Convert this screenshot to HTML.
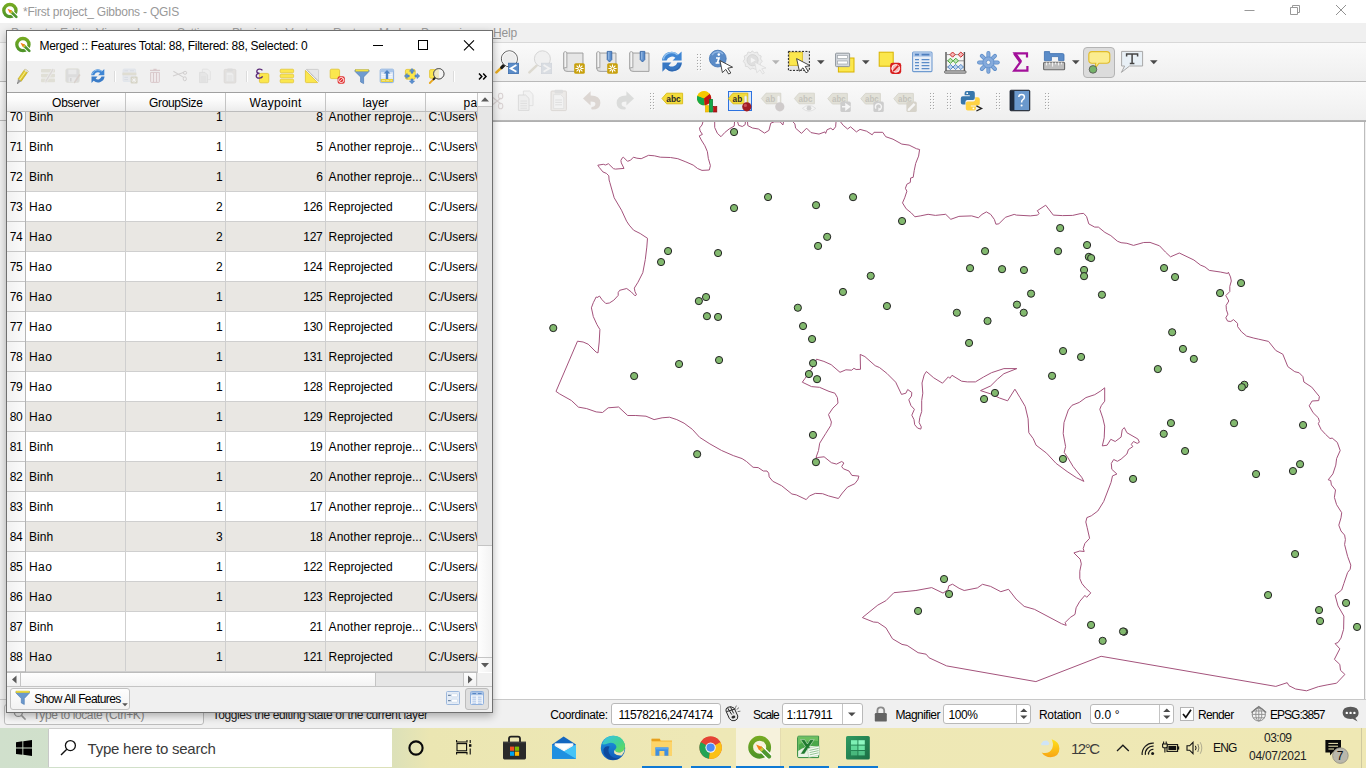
<!DOCTYPE html>
<html><head><meta charset="utf-8"><title>QGIS</title>
<style>
html,body{margin:0;padding:0;background:#fff;}
body{width:1366px;height:768px;overflow:hidden;font-family:"Liberation Sans",sans-serif;}
#root{position:relative;width:1366px;height:768px;overflow:hidden;background:#fff;}
.a{position:absolute;}
.t{position:absolute;white-space:pre;font-family:"Liberation Sans",sans-serif;}
svg{position:absolute;overflow:visible;}

</style></head>
<body>
<div id="root">
<div class="a" style="left:0;top:0;width:1366px;height:23px;background:#fff"></div>
<svg style="left:2px;top:3px" width="16" height="16" viewBox="0 0 16 16"><defs><linearGradient id="qg" x1="0" y1="0" x2="0" y2="1"><stop offset="0" stop-color="#74aa22"/><stop offset="1" stop-color="#4f9428"/></linearGradient></defs><circle cx="7.9" cy="7.6" r="6.1" fill="none" stroke="url(#qg)" stroke-width="3.3"/><path d="M8.6 8.4 L14.6 14.2" stroke="#fff" stroke-width="4.4" stroke-linecap="butt"/><path d="M9 8.8 L14.3 13.9" stroke="#4e9630" stroke-width="2.7" stroke-linecap="round"/><path d="M8 7.8 L10 9.8" stroke="#c9c23a" stroke-width="2.6"/><path d="M5.5 5.7 L9.7 7.5 L7.5 9.7 Z" fill="#f47f16"/></svg>
<span class="t" style="left:23.00px;top:3.50px;height:17px;line-height:17px;font-size:12px;color:#999999;letter-spacing:-0.224px;">*First project_ Gibbons - QGIS</span>
<svg style="left:1230px;top:-0.8px" width="136" height="23" viewBox="0 0 136 23"><path d="M14.5 11.5 H24.5" stroke="#999" stroke-width="1"/><path d="M60.5 8.5 H67.5 V15.5 H60.5 Z M62.5 8.5 V6.5 H69.5 V13.5 H67.5" fill="none" stroke="#999" stroke-width="1"/><path d="M106 6 L116 16 M116 6 L106 16" stroke="#8c8c8c" stroke-width="0.95"/></svg>
<div class="a" style="left:0;top:23px;width:1366px;height:19px;background:#f0f0f0"></div>
<div class="a" style="left:0;top:42px;width:1366px;height:1px;background:#d8d8d8"></div>
<span class="t" style="left:11.00px;top:24.50px;height:17px;line-height:17px;font-size:12px;color:#a0a0a0;letter-spacing:-0.051px;">Project</span>
<span class="t" style="left:60.00px;top:24.50px;height:17px;line-height:17px;font-size:12px;color:#a0a0a0;letter-spacing:0.328px;">Edit</span>
<span class="t" style="left:96.00px;top:24.50px;height:17px;line-height:17px;font-size:12px;color:#a0a0a0;letter-spacing:0.551px;">View</span>
<span class="t" style="left:137.00px;top:24.50px;height:17px;line-height:17px;font-size:12px;color:#a0a0a0;letter-spacing:-0.606px;">Layer</span>
<span class="t" style="left:177.00px;top:24.50px;height:17px;line-height:17px;font-size:12px;color:#a0a0a0;letter-spacing:-0.420px;">Settings</span>
<span class="t" style="left:232.00px;top:24.50px;height:17px;line-height:17px;font-size:12px;color:#a0a0a0;letter-spacing:-0.480px;">Plugins</span>
<span class="t" style="left:285.50px;top:24.50px;height:17px;line-height:17px;font-size:12px;color:#a0a0a0;letter-spacing:-0.172px;">Vector</span>
<span class="t" style="left:333.00px;top:24.50px;height:17px;line-height:17px;font-size:12px;color:#a0a0a0;letter-spacing:-0.557px;">Raster</span>
<span class="t" style="left:379.00px;top:24.50px;height:17px;line-height:17px;font-size:12px;color:#a0a0a0;letter-spacing:-1.086px;">Mesh</span>
<span class="t" style="left:421.00px;top:24.50px;height:17px;line-height:17px;font-size:12px;color:#a0a0a0;letter-spacing:-0.738px;">Processing</span>
<span class="t" style="left:493.00px;top:24.50px;height:17px;line-height:17px;font-size:12px;color:#949494;letter-spacing:-0.172px;">Help</span>
<div class="a" style="left:493px;top:38px;width:8px;height:1px;background:#8a8a8a"></div>
<div class="a" style="left:0;top:43px;width:1366px;height:38px;background:linear-gradient(#fafafa,#efefef)"></div>
<div class="a" style="left:0;top:81px;width:1366px;height:1px;background:#b9b9b9"></div>
<div class="a" style="left:0;top:82px;width:1366px;height:38px;background:linear-gradient(#fafafa,#efefef)"></div>
<div class="a" style="left:0;top:120px;width:1366px;height:2px;background:linear-gradient(#b8b8b8,#adadad)"></div>
<div class="a" style="left:0;top:122px;width:1366px;height:577px;background:#fff"></div>
<div class="a" style="left:1364px;top:122px;width:1px;height:577px;background:#bdbdbd"></div>
<div class="a" style="left:1365px;top:122px;width:1px;height:577px;background:#f0f0f0"></div>
<div class="a" style="left:0;top:699px;width:1366px;height:29px;background:#f0f0f0"></div>
<div class="a" style="left:0;top:699px;width:1366px;height:1px;background:#c8c8c8"></div>
<div class="a" style="left:0;top:728px;width:1366px;height:40px;background:linear-gradient(90deg,#d0e0cc 0px,#d2e0c8 200px,#dde1b8 395px,#ebe6b2 430px,#eee8b6 700px,#efe8b4 1366px)"></div>
<svg class="map" style="left:0;top:122px;overflow:hidden" width="1364" height="577" viewBox="0 122 1364 577"><polyline points="703.5,120 702.0,125.0 699.5,128.0 700.1,130.9 702.4,134.4 699.2,135.9 701.3,140.0 704.9,145.8 707.4,151.7 708.3,158.3 710.4,165.6 709.3,170.0 702.0,170.4 697.6,168.5 693.2,165.1 685.9,161.9 677.8,158.7 670.5,157.5 660.3,157.2 654.4,155.8 648.6,155.3 641.2,158.7 636.9,158.2 633.4,157.2 630.6,160.2 627.5,161.3 623.4,157.2 622,158.2 620.9,160.5 621.3,162.9 624,168.4 615.4,169.1 613.4,168.6 608.4,163.7 605.6,165 603.3,164.3 597.8,165.2 599.4,167.6 602.9,171.9 606.4,173.4 608.8,175.8 609.1,180 609.8,182.4 614.2,197.8 621.5,210.2 626.6,221.2 629.2,225.1 633.6,230.2 640.2,233.5 647.5,238.3 646.8,247.1 645.3,259.5 642.8,272.7 638,282.2 634.3,288.1 635,291.7 636.5,294.7 635,295.8 631.4,292 626.7,288.5 619.7,290.3 618.2,292.5 618.2,295.4 613.8,300.2 609.4,303 605.8,303.5 602.1,299.8 599.5,296.1 597,297.6 596.2,296.9 593.3,302.7 591.4,307.8 593.3,316.6 597,324.7 599.9,329.5 599.2,342 598,352.9 596.2,352.2 588.2,344.2 583.1,342 577.5,341.2 556,391.4 559.6,393.9 571.4,400.5 578.4,407.1 586.7,408.6 596.2,411.9 602.5,412.5 608.2,407.8 618.6,407 627.7,415.5 635.8,415.5 646,416.2 654.1,419.6 662.1,417.8 669.5,417.2 676.8,419.6 684.1,423.2 692.3,429.3 699.6,437.3 709.9,443.9 721.6,450.5 733.3,455.6 742.1,458.6 746.5,461.5 753.1,467.3 758.2,467.6 763.3,471 767,471 768.7,473.2 769.2,476.9 772.8,481.3 781.6,485.7 791.9,494 796.3,494.9 806.2,499.6 809.5,495.9 815.3,493.4 822.6,493.7 828.5,495.9 838.4,498.5 842.4,493 847.5,487.1 854.8,483.7 857.8,479.8 858.9,476.1 851.9,475.4 849,471 843.4,468.8 841.7,466.6 843.9,463 841.7,461.5 836.5,464.1 831.4,462.7 824.1,456.8 817.5,457.5 816,457.5 818.5,450.5 819.7,443.2 825.6,433.7 830.7,425.6 831.4,422 828.5,414.6 832.9,408.1 838,403.2 837.4,397.6 834.9,393.2 829,391.4 819.5,387.3 811.5,386.6 802.3,382.2 804.9,378.6 812.9,366.9 816.6,359.2 823.9,361.4 831.2,364.7 840,372.3 845.9,369.8 851.7,370.2 853.9,368.3 856.1,369.5 860.5,369.3 860.2,354.4 864.9,356.6 875.2,365.7 879.6,367.6 886.9,373.4 895.7,382.2 901.5,394.4 905.9,393.2 907.7,389.5 911.8,392.5 911.5,396.1 908.8,399.8 911,405.7 914.4,409.3 911.8,415.2 914,419.6 914.7,424.7 917.6,428.1 920.8,429.1 921.3,426.9 919.1,422.5 919.8,417.4 921.7,411.5 921.7,400.5 922.8,393.2 922,383 924.2,374.9 926.4,371.5 933.7,377.8 942.5,383.2 948.4,376.8 949.8,378.3 952,375.3 961.6,381.2 967.3,381.9 975.4,381.9 983.4,377.1 991.5,372.7 1003.9,368.6 1016.8,368.6 1003.9,373.7 997.3,379.3 990.7,385.9 980.5,390.6 990.7,393.9 999.5,398 1007.6,400.8 1014.9,389.2 1020,397.6 1025.2,406.4 1028.1,418.8 1028.8,432.7 1033.2,438.6 1036.1,445.2 1046.6,453.2 1056.1,463.4 1067.1,471.5 1076.6,477.8 1083.9,481.4 1081.7,477.3 1073,466.4 1067.8,457.6 1064.2,452.4 1065.6,446.6 1063.2,433.5 1064,422.5 1068.3,410 1072,405.3 1079.3,402.4 1085.9,397.6 1094.7,394.7 1100.6,391 1104.7,387.8 1104.7,401.2 1101.3,405.6 1099.8,409.3 1102.8,418.1 1104.7,426.1 1104.2,437.8 1102.3,445.9 1107.1,445.2 1110.8,439.3 1115.2,441.5 1121.1,437.1 1122.2,429.8 1124.3,427.6 1126.9,432.7 1137.9,439 1139.4,442.2 1137.2,443.4 1133.5,441.5 1131.3,444.4 1132.8,446.6 1128.4,449.6 1126.9,454 1121.1,459.1 1117.4,461.3 1113.7,459.5 1111.3,463.4 1111.8,469.3 1116.9,474 1112.5,475.9 1111,482.5 1103.7,501.5 1097.8,511 1091.3,515.8 1086.9,517.6 1085.8,522 1087.1,527.3 1089.6,538.3 1084.9,543.4 1083.2,548.6 1084.2,551.5 1079.8,551 1073.9,552.9 1080.2,559.2 1081.3,563.9 1079.8,571.2 1079.8,578.6 1082,583.7 1085.7,588.1 1090.8,592.9 1086.7,597.3 1084.9,595.4 1079.8,601.3 1076.1,607.8 1075,614.4 1070.3,617.4 1065.2,622.5 1066.2,625.4 1061.5,623.7 1034.4,609.3 1024.2,606.4 1016.1,599.1 1008.5,589.3 1000.8,591.7 990.6,586.4 982.5,584.3 977.4,587.9 964.2,590.5 959.1,588.3 952.5,584.2 948.8,585.8 947.8,589.8 943,593.1 931.7,587.6 915.9,590.5 893.9,592.7 885.9,600.7 877.8,605.1 862.4,617.6 873.4,622 877.8,622.4 885.9,627.8 892.5,638.8 902,644.4 907.1,645.4 918.1,652.7 926.1,654.2 929.1,657.8 946.6,665.9 1035.9,681.6 1101.1,656.3 1275.8,686.4 1287.2,682.7 1289,685.7 1295.6,689 1306.6,690.8 1318.3,686.7 1327.1,684.9 1336.6,683.2 1344.9,674.4 1340.5,670.3 1339.8,664.4 1334.4,659.3 1339.8,648.8 1335.1,643.6 1338,642.5 1341,638.1 1343.6,629.3 1343.9,616.1 1338,605.9 1335.1,595.2 1341.7,590 1343.9,583.4 1347.6,572.5 1350.2,569.2 1350.8,565.1 1347.6,556.4 1344.6,544.6 1345.4,539.5 1344.6,535.1 1341,531 1338.8,525.2 1341,517.8 1341.7,512.7 1336.6,504.7 1334.4,497.4 1335.5,490 1331.4,484.9 1330.7,480.5 1328.2,479.8 1332.9,473.9 1335.8,465.1 1336.6,458.6 1340.2,450.5 1337.3,442.4 1332.2,438.1 1330,438.5 1325.6,434.4 1321.2,429.6 1318.3,423.7 1319.4,421.5 1318.3,417.8 1313.1,412.7 1309.2,405.8 1312.1,401 1318.7,400.6 1319.4,396.6 1311.7,387.1 1303.9,382 1302.9,376.6 1299.2,372.8 1294.8,371.7 1287.8,366.6 1282.8,354.2 1275.8,350.5 1268.5,341.4 1258.3,339.1 1253.8,338.1 1246.6,336.1 1241.5,331.8 1237.6,326.6 1237.6,323.4 1233.5,319.6 1230.8,321.5 1227.6,321.1 1225.8,317.8 1227.9,314.2 1226.4,309.8 1226.1,305.4 1228.8,301 1225.8,295.6 1229.8,291.5 1229.8,286.4 1231.3,281 1230.5,276.9 1228.3,272.2 1227.6,273.5 1220.3,272 1209.3,270.4 1204.9,266.9 1200.5,265.1 1193.9,260 1179.3,253 1170.5,256.8 1165.4,252 1159.5,245.8 1150,242.4 1143.7,242.5 1133.5,245.4 1126.9,243.3 1121.1,242.7 1117.4,241.2 1110.8,235.6 1104.9,232.4 1098.4,227.1 1094.7,227.1 1088.8,223.9 1086.6,216.6 1083.7,213.4 1080.1,213.7 1072.7,215.4 1062.5,215.6 1053.3,215.1 1045.7,205.2 1037.3,210.7 1039.1,213.4 1037.6,215.1 1030.3,215.9 1016.4,215.1 1014.2,214.4 1005.4,217.3 998.8,223.9 995.9,224.2 994.4,219.5 990.7,214.4 986.4,211.9 982,214.4 978.3,217.8 971.7,215.9 960,216.3 958.9,216.4 950.8,219.3 945.7,214.3 935.4,215.4 928.1,214.3 920.8,215.8 914.9,216.8 911.3,212.9 906.2,208.8 902.5,202.9 904.7,197.8 906.9,191.2 905.4,188.3 906.9,184.2 910.3,182.4 910.6,178.0 913.2,177.3 914.2,170.7 915.7,163.4 918.6,156.1 919.6,149.5 916.4,148.7 909.1,145.1 901.8,144.1 893.0,139.2 885.7,136.7 882.7,132.3 874.0,132.3 872.2,134.8 866.6,131.2 860.0,129.4 856.4,131.9 850.5,126.8 847.6,129.0 843.2,125.3 839.1,120" fill="none" stroke="#a4537c" stroke-width="1" stroke-linejoin="round"/><polyline points="714.7,120 714.7,127.5 717.4,133.4 721.0,136.7 724.7,132.6 729.1,129.0 734.2,126.1 734.7,120" fill="none" stroke="#a4537c" stroke-width="1" stroke-linejoin="round"/><polyline points="737.1,120 738.6,125.3 742.3,126.5 745.2,124.6 745.5,120" fill="none" stroke="#a4537c" stroke-width="1" stroke-linejoin="round"/><polyline points="747.4,120 747.8,125.6 752.5,128.0 758.4,129.0 764.5,133.1 768.9,130.4 770.8,123.1 774.5,121.8 780.2,121.8 782.9,125.0 783.9,120" fill="none" stroke="#a4537c" stroke-width="1" stroke-linejoin="round"/><polyline points="791.2,120 794.9,123.9 795.6,128.2 801.5,133.4 806.6,128.2 811.0,132.6 819.0,134.1 824.9,131.9 825.6,133.4 827.1,129.7 830.8,128.2 833,130 835.6,126.8 836.2,120" fill="none" stroke="#a4537c" stroke-width="1" stroke-linejoin="round"/><g fill="#82b96e" stroke="#232323" stroke-width="1"><circle cx="734.05" cy="132.05" r="3.6"/><circle cx="768.05" cy="197.05" r="3.6"/><circle cx="734.05" cy="208.05" r="3.6"/><circle cx="816.05" cy="205.15" r="3.6"/><circle cx="853.05" cy="197.15" r="3.6"/><circle cx="902.05" cy="221.05" r="3.6"/><circle cx="827.15" cy="236.85" r="3.6"/><circle cx="818.05" cy="245.95" r="3.6"/><circle cx="668.05" cy="251.05" r="3.6"/><circle cx="661.05" cy="262.05" r="3.6"/><circle cx="718.05" cy="253.05" r="3.6"/><circle cx="870.75" cy="275.85" r="3.6"/><circle cx="842.95" cy="291.95" r="3.6"/><circle cx="886.95" cy="306.05" r="3.6"/><circle cx="797.85" cy="307.75" r="3.6"/><circle cx="706.05" cy="297.05" r="3.6"/><circle cx="698.85" cy="301.05" r="3.6"/><circle cx="706.95" cy="316.15" r="3.6"/><circle cx="718.05" cy="316.95" r="3.6"/><circle cx="803.05" cy="326.05" r="3.6"/><circle cx="812.05" cy="339.05" r="3.6"/><circle cx="553.25" cy="328.05" r="3.6"/><circle cx="719.05" cy="360.05" r="3.6"/><circle cx="679.05" cy="364.05" r="3.6"/><circle cx="634.15" cy="376.05" r="3.6"/><circle cx="813.05" cy="363.15" r="3.6"/><circle cx="808.95" cy="374.05" r="3.6"/><circle cx="817.05" cy="379.15" r="3.6"/><circle cx="812.95" cy="434.95" r="3.6"/><circle cx="697.15" cy="454.15" r="3.6"/><circle cx="815.95" cy="462.15" r="3.6"/><circle cx="1060.15" cy="228.05" r="3.6"/><circle cx="1087.05" cy="245.05" r="3.6"/><circle cx="1058.05" cy="251.15" r="3.6"/><circle cx="1088.85" cy="256.85" r="3.6"/><circle cx="1091.15" cy="258.05" r="3.6"/><circle cx="985.05" cy="251.15" r="3.6"/><circle cx="970.05" cy="268.15" r="3.6"/><circle cx="1002.05" cy="269.15" r="3.6"/><circle cx="1023.95" cy="270.05" r="3.6"/><circle cx="1084.05" cy="269.95" r="3.6"/><circle cx="1084.05" cy="276.15" r="3.6"/><circle cx="1101.95" cy="294.75" r="3.6"/><circle cx="1031.05" cy="293.65" r="3.6"/><circle cx="1016.95" cy="304.65" r="3.6"/><circle cx="1023.75" cy="312.75" r="3.6"/><circle cx="956.85" cy="312.75" r="3.6"/><circle cx="987.55" cy="320.95" r="3.6"/><circle cx="969.05" cy="342.95" r="3.6"/><circle cx="1063.05" cy="351.05" r="3.6"/><circle cx="1081.05" cy="356.95" r="3.6"/><circle cx="1052.05" cy="375.85" r="3.6"/><circle cx="994.95" cy="392.95" r="3.6"/><circle cx="984.05" cy="399.05" r="3.6"/><circle cx="1164.05" cy="268.05" r="3.6"/><circle cx="1175.05" cy="277.05" r="3.6"/><circle cx="1241.05" cy="283.05" r="3.6"/><circle cx="1220.05" cy="293.05" r="3.6"/><circle cx="1172.15" cy="332.25" r="3.6"/><circle cx="1182.95" cy="348.95" r="3.6"/><circle cx="1193.85" cy="358.95" r="3.6"/><circle cx="1157.85" cy="369.05" r="3.6"/><circle cx="1244.35" cy="384.75" r="3.6"/><circle cx="1241.85" cy="387.15" r="3.6"/><circle cx="1170.95" cy="423.05" r="3.6"/><circle cx="1163.75" cy="433.85" r="3.6"/><circle cx="1234.05" cy="423.15" r="3.6"/><circle cx="1303.05" cy="425.05" r="3.6"/><circle cx="1185.05" cy="451.05" r="3.6"/><circle cx="1062.95" cy="458.95" r="3.6"/><circle cx="1133.05" cy="478.95" r="3.6"/><circle cx="1300.05" cy="464.15" r="3.6"/><circle cx="1292.95" cy="471.05" r="3.6"/><circle cx="1256.05" cy="474.05" r="3.6"/><circle cx="1295.05" cy="554.05" r="3.6"/><circle cx="1268.05" cy="595.05" r="3.6"/><circle cx="1319.05" cy="610.05" r="3.6"/><circle cx="1320.05" cy="621.05" r="3.6"/><circle cx="1346.05" cy="602.95" r="3.6"/><circle cx="1357.05" cy="626.95" r="3.6"/><circle cx="944.05" cy="579.05" r="3.6"/><circle cx="949.05" cy="594.05" r="3.6"/><circle cx="918.05" cy="610.95" r="3.6"/><circle cx="1091.05" cy="624.95" r="3.6"/><circle cx="1102.65" cy="640.85" r="3.6"/><circle cx="1124.05" cy="631.75" r="3.6"/><circle cx="1123.05" cy="631.45" r="3.6"/></g></svg>
<svg style="left:494px;top:49px" width="26" height="26" viewBox="0 0 26 26"><path d="M9.6 16.6 L2.4 23.4" stroke="#e8ab1e" stroke-width="2.6" stroke-linecap="round"/><path d="M9.8 16.4 L7.6 18.6" stroke="#1a1a1a" stroke-width="3" stroke-linecap="round"/><circle cx="15.4" cy="9.8" r="8" fill="#ececec" stroke="#555" stroke-width="1"/><circle cx="15.4" cy="9.8" r="7" fill="none" stroke="#fafafa" stroke-width="1"/><rect x="14.4" y="14.2" width="10.2" height="10.4" fill="#5b8cc8" stroke="#3d6fae" stroke-width="0.8"/><path d="M22.4 16 L16.6 19.4 L22.4 22.8" fill="none" stroke="#fff" stroke-width="1.8"/></svg>
<svg style="left:527px;top:49px" width="26" height="26" viewBox="0 0 26 26"><path d="M9.6 16.6 L2.4 23.4" stroke="#dcd9d0" stroke-width="2.6" stroke-linecap="round"/><circle cx="15.4" cy="9.8" r="8" fill="#f0f0f0" stroke="#d6d6d6" stroke-width="1"/><rect x="14.4" y="14.2" width="10.2" height="10.4" fill="#d9dde2" stroke="#d2d6dc" stroke-width="0.8"/><path d="M16.6 16 L22.4 19.4 L16.6 22.8" fill="none" stroke="#f2f2f2" stroke-width="1.8"/></svg>
<svg style="left:563px;top:50.6px" width="23" height="24" viewBox="0 0 23 24"><path d="M3.6 2 H20 V20.4 H4 Q0.8 20.4 0.8 17.6 V2 Z" fill="#dedede" stroke="#9b9b9b" stroke-width="0.9"/><path d="M0.8 2 Q0.8 0.6 2.2 0.6 Q3.8 0.6 3.8 2 V16.6 Q0.8 16.2 0.8 17.6 Z" fill="#f4f4f4" stroke="#9b9b9b" stroke-width="0.8"/><path d="M5 3 H19 V19.4 H5 Z" fill="#e6e6e6"/><rect x="11.2" y="12.2" width="10.6" height="10.6" rx="1.6" fill="#c8a00c"/><path d="M16.5 13.4 V21.6 M12.4 17.5 H20.6 M13.6 14.6 L19.4 20.4 M19.4 14.6 L13.6 20.4" stroke="#fff" stroke-width="1.1"/><circle cx="16.5" cy="17.5" r="1.5" fill="#c8a00c" stroke="#fff" stroke-width="0.9"/></svg>
<svg style="left:596px;top:50.6px" width="23" height="24" viewBox="0 0 23 24"><path d="M3.6 2 H20 V20.4 H4 Q0.8 20.4 0.8 17.6 V2 Z" fill="#dedede" stroke="#9b9b9b" stroke-width="0.9"/><path d="M0.8 2 Q0.8 0.6 2.2 0.6 Q3.8 0.6 3.8 2 V16.6 Q0.8 16.2 0.8 17.6 Z" fill="#f4f4f4" stroke="#9b9b9b" stroke-width="0.8"/><path d="M5 3 H19 V19.4 H5 Z" fill="#e6e6e6"/><path d="M11.2 0.4 H15.799999999999999 V8.6 L13.5 11 L11.2 8.6 Z" fill="#5d8fcd" stroke="#2f5f9f" stroke-width="0.8"/><path d="M12.799999999999999 1 V8.6" stroke="#a9c7ea" stroke-width="0.9"/><rect x="11.2" y="12.2" width="10.6" height="10.6" rx="1.6" fill="#c8a00c"/><path d="M16.5 13.4 V21.6 M12.4 17.5 H20.6 M13.6 14.6 L19.4 20.4 M19.4 14.6 L13.6 20.4" stroke="#fff" stroke-width="1.1"/><circle cx="16.5" cy="17.5" r="1.5" fill="#c8a00c" stroke="#fff" stroke-width="0.9"/></svg>
<svg style="left:629px;top:50.6px" width="23" height="24" viewBox="0 0 23 24"><path d="M3.6 2 H20 V20.4 H4 Q0.8 20.4 0.8 17.6 V2 Z" fill="#dedede" stroke="#9b9b9b" stroke-width="0.9"/><path d="M0.8 2 Q0.8 0.6 2.2 0.6 Q3.8 0.6 3.8 2 V16.6 Q0.8 16.2 0.8 17.6 Z" fill="#f4f4f4" stroke="#9b9b9b" stroke-width="0.8"/><path d="M5 3 H19 V19.4 H5 Z" fill="#e6e6e6"/><path d="M11.2 0.4 H15.799999999999999 V8.6 L13.5 11 L11.2 8.6 Z" fill="#5d8fcd" stroke="#2f5f9f" stroke-width="0.8"/><path d="M12.799999999999999 1 V8.6" stroke="#a9c7ea" stroke-width="0.9"/></svg>
<svg style="left:661px;top:50px" width="22" height="24" viewBox="0 0 22 24"><path d="M1 10.6 A9.6 9.6 0 0 1 17.4 4.6 L20.6 1.4 L20.6 10.6 L11.6 10.6 L14.4 7.8 A5.6 5.6 0 0 0 5.6 10.6 Z" fill="#3f86d4"/><path d="M21 12.6 A9.6 9.6 0 0 1 4.6 18.6 L1.4 21.8 L1.4 12.6 L10.4 12.6 L7.6 15.4 A5.6 5.6 0 0 0 16.4 12.6 Z" fill="#3878c4"/><path d="M2.4 9.4 A8.4 8.4 0 0 1 16.6 5" fill="none" stroke="#8fc0ee" stroke-width="1.4"/><path d="M19.6 13.8 A8.4 8.4 0 0 1 5.4 18.2" fill="none" stroke="#2f68b0" stroke-width="1.2"/></svg>
<svg style="left:697px;top:54px" width="5" height="18" viewBox="0 0 5 18"><rect x="1" y="1" width="1" height="1" fill="#fdfdfd"/><rect x="0" y="0" width="1" height="1" fill="#a6a6a6"/><rect x="4" y="1" width="1" height="1" fill="#fdfdfd"/><rect x="3" y="0" width="1" height="1" fill="#a6a6a6"/><rect x="1" y="4" width="1" height="1" fill="#fdfdfd"/><rect x="0" y="3" width="1" height="1" fill="#a6a6a6"/><rect x="4" y="4" width="1" height="1" fill="#fdfdfd"/><rect x="3" y="3" width="1" height="1" fill="#a6a6a6"/><rect x="1" y="7" width="1" height="1" fill="#fdfdfd"/><rect x="0" y="6" width="1" height="1" fill="#a6a6a6"/><rect x="4" y="7" width="1" height="1" fill="#fdfdfd"/><rect x="3" y="6" width="1" height="1" fill="#a6a6a6"/><rect x="1" y="10" width="1" height="1" fill="#fdfdfd"/><rect x="0" y="9" width="1" height="1" fill="#a6a6a6"/><rect x="4" y="10" width="1" height="1" fill="#fdfdfd"/><rect x="3" y="9" width="1" height="1" fill="#a6a6a6"/><rect x="1" y="13" width="1" height="1" fill="#fdfdfd"/><rect x="0" y="12" width="1" height="1" fill="#a6a6a6"/><rect x="4" y="13" width="1" height="1" fill="#fdfdfd"/><rect x="3" y="12" width="1" height="1" fill="#a6a6a6"/><rect x="1" y="16" width="1" height="1" fill="#fdfdfd"/><rect x="0" y="15" width="1" height="1" fill="#a6a6a6"/><rect x="4" y="16" width="1" height="1" fill="#fdfdfd"/><rect x="3" y="15" width="1" height="1" fill="#a6a6a6"/></svg>
<svg style="left:709px;top:50px" width="26" height="25" viewBox="0 0 26 25"><circle cx="8.8" cy="8.6" r="8.4" fill="#5b8cc8" stroke="#3f72b4" stroke-width="0.8"/><path d="M3 5 A7 7 0 0 1 14 4" fill="none" stroke="#8db4e2" stroke-width="1.4"/><circle cx="9.8" cy="4.6" r="1.3" fill="#fff"/><path d="M7 8 H10 L8.4 13 H10.4 M6.6 13 H10.4" fill="none" stroke="#fff" stroke-width="1.7"/><path d="M11 10.6 L23.6 17.2 L18.8 18.2 L21.8 23 L19.6 24 L16.8 19.4 L13.4 22.6 Z" fill="#fff" stroke="#333" stroke-width="0.9"/></svg>
<svg style="left:742px;top:50px" width="26" height="25" viewBox="0 0 26 25"><path d="M10 0.8 L12.4 2.6 L15.4 2 L16.4 4.8 L19.2 6 L18.6 9 L20.4 11.4 L18.2 13.4 L18.2 16.4 L15.2 16.8 L13.6 19.4 L10.8 18.2 L8 19.4 L6.2 16.8 L3.4 16.4 L3.2 13.4 L1 11.4 L2.8 9 L2.2 6 L5 4.8 L6 2 L9 2.6 Z" fill="#ededed" stroke="#d9d9d9" stroke-width="0.9"/><circle cx="10.6" cy="10.2" r="5.6" fill="#dfdfdf" stroke="#d2d2d2" stroke-width="0.8"/><path d="M8.8 7.4 L13.6 10.2 L8.8 13 Z" fill="#f4f4f4"/><path d="M12.6 12 L24 18 L19.8 18.8 L22.4 23 L20.6 24 L18 19.8 L14.8 22.8 Z" fill="#f2f2f2" stroke="#dcdcdc" stroke-width="0.8"/></svg>
<svg style="left:772px;top:60px" width="8" height="5" viewBox="0 0 8 5"><path d="M0 0.3 H7.6 L3.8 4.2 Z" fill="#b4b4b4"/></svg>
<svg style="left:787px;top:50px" width="26" height="26" viewBox="0 0 26 26"><rect x="1.4" y="1.4" width="21" height="19" fill="#e4e4e4"/><rect x="2.2" y="2.2" width="13.2" height="13.2" fill="#fbe74d" stroke="#d8b92a" stroke-width="0.9"/><rect x="1.4" y="1.4" width="21" height="19" fill="none" stroke="#222" stroke-width="1" stroke-dasharray="2 1.4"/><path d="M9.6 8.6 L23 15.6 L18.2 16.6 L21.2 21.6 L19 22.8 L16 17.8 L12.4 21.2 Z" fill="#fff" stroke="#333" stroke-width="0.9"/></svg>
<svg style="left:817px;top:60px" width="8" height="5" viewBox="0 0 8 5"><path d="M0 0.3 H7.6 L3.8 4.2 Z" fill="#4a4a4a"/></svg>
<svg style="left:835px;top:52px" width="20" height="21" viewBox="0 0 20 21"><rect x="3.4" y="6" width="15.6" height="14" fill="#fbe74d" stroke="#d8b200" stroke-width="1"/><rect x="0.6" y="1.2" width="14" height="13.4" rx="0.8" fill="#d5d9de" stroke="#8e959c" stroke-width="1"/><rect x="2.6" y="3.6" width="10" height="3" fill="#fff" stroke="#9ea5ac" stroke-width="0.7"/><rect x="2.6" y="9" width="10" height="3" fill="#fff" stroke="#9ea5ac" stroke-width="0.7"/></svg>
<svg style="left:862px;top:60px" width="8" height="5" viewBox="0 0 8 5"><path d="M0 0.3 H7.6 L3.8 4.2 Z" fill="#4a4a4a"/></svg>
<svg style="left:878px;top:51px" width="24" height="24" viewBox="0 0 24 24"><rect x="1.2" y="1.2" width="14" height="14" fill="#fbe74d" stroke="#d8b200" stroke-width="1"/><rect x="12.2" y="11.8" width="11" height="11.2" rx="2.4" fill="#d81e1e"/><circle cx="17.7" cy="17.4" r="3.9" fill="#f4b8b8" stroke="#fff" stroke-width="0.9"/><path d="M15 20.2 L20.4 14.6" stroke="#d81e1e" stroke-width="1.6"/></svg>
<svg style="left:912px;top:51px" width="21" height="22" viewBox="0 0 21 22"><rect x="0.6" y="1" width="19.4" height="19.6" rx="1" fill="#e8eef6" stroke="#6f9bd0" stroke-width="1.1"/><rect x="1.2" y="1.6" width="18.2" height="4" fill="#a8c4e8"/><path d="M3 3.6 H7 M9.6 3.6 H17.4" stroke="#4f7fbe" stroke-width="1.6"/><path d="M3 8.6 H7 M9.6 8.6 H17.4 M3 11.6 H7 M9.6 11.6 H17.4 M3 14.6 H7 M9.6 14.6 H17.4 M3 17.6 H7 M9.6 17.6 H17.4" stroke="#5b8cc8" stroke-width="1.1"/></svg>
<svg style="left:944px;top:51px" width="23" height="23" viewBox="0 0 23 23"><path d="M2 1 V20 M20.4 1 V20" stroke="#555" stroke-width="1.4"/><path d="M2 3.6 H20.4 M2 9.8 H20.4 M2 16 H20.4" stroke="#777" stroke-width="0.8"/><rect x="0.6" y="19.8" width="21.4" height="2.4" rx="0.8" fill="#bdbdbd" stroke="#555" stroke-width="0.8"/><path d="M8.6 1 L11.2 3.6 L8.6 6.2 L6 3.6 Z M16.8 1 L19.4 3.6 L16.8 6.2 L14.2 3.6 Z" fill="#f6b6b6" stroke="#cc2a2a" stroke-width="1"/><path d="M6.4 7.2 L9 9.8 L6.4 12.4 L3.8 9.8 Z M11.8 7.2 L14.4 9.8 L11.8 12.4 L9.2 9.8 Z" fill="#bfe6b6" stroke="#4aa83a" stroke-width="1"/><path d="M6.4 13.4 L9 16 L6.4 18.6 L3.8 16 Z M11.6 13.4 L14.2 16 L11.6 18.6 L9 16 Z M16.8 13.4 L19.4 16 L16.8 18.6 L14.2 16 Z" fill="#b9d3ef" stroke="#5b8cc8" stroke-width="1"/></svg>
<svg style="left:976.6px;top:50.6px" width="23" height="23" viewBox="0 0 23 23"><path d="M16.00 11.40 L20.70 11.40" stroke="#5b8cc8" stroke-width="4.0" stroke-linecap="round"/><path d="M14.65 14.65 L17.98 17.98" stroke="#5b8cc8" stroke-width="4.0" stroke-linecap="round"/><path d="M11.40 16.00 L11.40 20.70" stroke="#5b8cc8" stroke-width="4.0" stroke-linecap="round"/><path d="M8.15 14.65 L4.82 17.98" stroke="#5b8cc8" stroke-width="4.0" stroke-linecap="round"/><path d="M6.80 11.40 L2.10 11.40" stroke="#5b8cc8" stroke-width="4.0" stroke-linecap="round"/><path d="M8.15 8.15 L4.82 4.82" stroke="#5b8cc8" stroke-width="4.0" stroke-linecap="round"/><path d="M11.40 6.80 L11.40 2.10" stroke="#5b8cc8" stroke-width="4.0" stroke-linecap="round"/><path d="M14.65 8.15 L17.98 4.82" stroke="#5b8cc8" stroke-width="4.0" stroke-linecap="round"/><path d="M16.00 11.40 L20.70 11.40" stroke="#86abdc" stroke-width="2.5" stroke-linecap="round"/><path d="M14.65 14.65 L17.98 17.98" stroke="#86abdc" stroke-width="2.5" stroke-linecap="round"/><path d="M11.40 16.00 L11.40 20.70" stroke="#86abdc" stroke-width="2.5" stroke-linecap="round"/><path d="M8.15 14.65 L4.82 17.98" stroke="#86abdc" stroke-width="2.5" stroke-linecap="round"/><path d="M6.80 11.40 L2.10 11.40" stroke="#86abdc" stroke-width="2.5" stroke-linecap="round"/><path d="M8.15 8.15 L4.82 4.82" stroke="#86abdc" stroke-width="2.5" stroke-linecap="round"/><path d="M11.40 6.80 L11.40 2.10" stroke="#86abdc" stroke-width="2.5" stroke-linecap="round"/><path d="M14.65 8.15 L17.98 4.82" stroke="#86abdc" stroke-width="2.5" stroke-linecap="round"/><circle cx="11.4" cy="11.4" r="5.5" fill="#86abdc" stroke="#5b8cc8" stroke-width="0.7"/><circle cx="11.4" cy="11.4" r="2.1" fill="#f3f3f3" stroke="#5b8cc8" stroke-width="0.8"/></svg>
<svg style="left:1012px;top:51px" width="18" height="22" viewBox="0 0 18 22"><path d="M15 6.4 V2.4 H2.6 L8.6 10.8 L2.2 19.6 H15.4 V15" fill="none" stroke="#a3109a" stroke-width="2.2" stroke-linejoin="miter"/><path d="M2.6 2.4 L8.6 10.8" stroke="#a3109a" stroke-width="3.2"/></svg>
<svg style="left:1042px;top:50px" width="24" height="22" viewBox="0 0 24 22"><path d="M2.4 1.6 H7.6 V3.6 H20.6 Q22 3.6 22 5 V10.6 H16.6 V6.6 H9.4 V10.6 H2.4 Z" fill="#5b8cc8" stroke="#3d6fae" stroke-width="0.8"/><rect x="1.6" y="12.2" width="21" height="7.6" rx="1" fill="#bdbdbd" stroke="#6a6a6a" stroke-width="1.1"/><path d="M4.6 12.4 V15.4 M7.6 12.4 V14.4 M10.6 12.4 V16.6 M13.6 12.4 V14.4 M16.6 12.4 V15.4 M19.6 12.4 V14.4" stroke="#f4f4f4" stroke-width="1"/></svg>
<svg style="left:1072px;top:60px" width="8" height="5" viewBox="0 0 8 5"><path d="M0 0.3 H7.6 L3.8 4.2 Z" fill="#4a4a4a"/></svg>
<div class="a" style="left:1083px;top:47px;width:32px;height:31px;box-sizing:border-box;border:1px solid #b4b4b4;border-radius:4px;background:#dcdcdc"></div>
<svg style="left:1087px;top:50px" width="25" height="25" viewBox="0 0 25 25"><path d="M5 1.6 H19.6 Q22.8 1.6 22.8 4.8 V10 Q22.8 13.2 19.6 13.2 H12 L8 18.4 L8.8 13.2 H5 Q1.8 13.2 1.8 10 V4.8 Q1.8 1.6 5 1.6 Z" fill="#fbec8f" stroke="#e0bb2a" stroke-width="1.1"/><circle cx="6" cy="19.4" r="3.8" fill="#75b46a" stroke="#5a5a5a" stroke-width="0.9"/></svg>
<svg style="left:1120px;top:50px" width="25" height="25" viewBox="0 0 25 25"><path d="M1.6 1.4 H22.6 V16 H9.6 L1.4 22.4 L4.6 16 H1.6 Z" fill="#e8f0f6" stroke="#a8a8a8" stroke-width="1"/><path d="M6.6 6.6 V4 H17.6 V6.6 M12.1 4 V13.4 M9.8 13.6 H14.4" fill="none" stroke="#444" stroke-width="1.5"/></svg>
<svg style="left:1150px;top:60px" width="8" height="5" viewBox="0 0 8 5"><path d="M0 0.3 H7.6 L3.8 4.2 Z" fill="#4a4a4a"/></svg>
<svg style="left:489px;top:91px" width="16" height="20" viewBox="0 0 16 20"><path d="M2 5 L12 13 M2 15 L12 7" stroke="#d9d2d2" stroke-width="1.2"/><ellipse cx="11.6" cy="5" rx="2.2" ry="2.8" fill="none" stroke="#d9d2d2" stroke-width="1.1"/><ellipse cx="11.6" cy="15" rx="2.2" ry="2.8" fill="none" stroke="#d9d2d2" stroke-width="1.1"/></svg>
<svg style="left:517px;top:90px" width="18" height="22" viewBox="0 0 18 22"><path d="M6.4 1 H12.6 L16 4.4 V15.6 H6.4 Z" fill="#f2f2f2" stroke="#dcdcdc" stroke-width="0.8"/><path d="M1.4 5 H8.6 L12 8.4 V20.4 H1.4 Z" fill="#eeeeee" stroke="#d8d8d8" stroke-width="0.9"/><path d="M3.4 11 H10 M3.4 13.4 H10 M3.4 15.8 H10 M3.4 18.2 H10" stroke="#dadada" stroke-width="0.8"/></svg>
<svg style="left:550px;top:89px" width="18" height="23" viewBox="0 0 18 23"><rect x="1" y="2" width="15.4" height="19.6" rx="1" fill="#eceae8" stroke="#d9d5d1" stroke-width="0.9"/><rect x="4.6" y="0.8" width="8.4" height="3.6" rx="0.8" fill="#dedede"/><path d="M3.6 5.6 H10.6 L13.8 8.8 V19.6 H3.6 Z" fill="#f2f2f2" stroke="#dcdcdc" stroke-width="0.7"/><path d="M5.2 11 H12 M5.2 13.4 H12 M5.2 15.8 H12" stroke="#d9d9d9" stroke-width="0.8"/></svg>
<svg style="left:582px;top:90px" width="20" height="21" viewBox="0 0 20 21"><path d="M1 8.4 L8.6 1.2 V5.4 Q18.6 5.6 18.4 13 Q18.2 19.6 10.4 19.6 Q9.2 19.6 9.2 18.2 Q9.2 17 10.6 16.8 Q13.4 16.4 13.4 13.8 Q13.4 11.4 8.6 11.4 V15.6 Z" fill="#dcd6d2"/></svg>
<svg style="left:615px;top:90px" width="20" height="21" viewBox="0 0 20 21"><path d="M19 8.4 L11.4 1.2 V5.4 Q1.4 5.6 1.6 13 Q1.8 19.6 9.6 19.6 Q10.8 19.6 10.8 18.2 Q10.8 17 9.4 16.8 Q6.6 16.4 6.6 13.8 Q6.6 11.4 11.4 11.4 V15.6 Z" fill="#dbdcdb"/></svg>
<svg style="left:650px;top:93px" width="5" height="18" viewBox="0 0 5 18"><rect x="1" y="1" width="1" height="1" fill="#fdfdfd"/><rect x="0" y="0" width="1" height="1" fill="#a6a6a6"/><rect x="4" y="1" width="1" height="1" fill="#fdfdfd"/><rect x="3" y="0" width="1" height="1" fill="#a6a6a6"/><rect x="1" y="4" width="1" height="1" fill="#fdfdfd"/><rect x="0" y="3" width="1" height="1" fill="#a6a6a6"/><rect x="4" y="4" width="1" height="1" fill="#fdfdfd"/><rect x="3" y="3" width="1" height="1" fill="#a6a6a6"/><rect x="1" y="7" width="1" height="1" fill="#fdfdfd"/><rect x="0" y="6" width="1" height="1" fill="#a6a6a6"/><rect x="4" y="7" width="1" height="1" fill="#fdfdfd"/><rect x="3" y="6" width="1" height="1" fill="#a6a6a6"/><rect x="1" y="10" width="1" height="1" fill="#fdfdfd"/><rect x="0" y="9" width="1" height="1" fill="#a6a6a6"/><rect x="4" y="10" width="1" height="1" fill="#fdfdfd"/><rect x="3" y="9" width="1" height="1" fill="#a6a6a6"/><rect x="1" y="13" width="1" height="1" fill="#fdfdfd"/><rect x="0" y="12" width="1" height="1" fill="#a6a6a6"/><rect x="4" y="13" width="1" height="1" fill="#fdfdfd"/><rect x="3" y="12" width="1" height="1" fill="#a6a6a6"/><rect x="1" y="16" width="1" height="1" fill="#fdfdfd"/><rect x="0" y="15" width="1" height="1" fill="#a6a6a6"/><rect x="4" y="16" width="1" height="1" fill="#fdfdfd"/><rect x="3" y="15" width="1" height="1" fill="#a6a6a6"/></svg>
<svg style="left:661px;top:92px" width="24" height="14" viewBox="0 0 24 14"><path d="M5.6 1.2 H21.6 V11.799999999999999 H5.6 L1 6.5 Z" fill="#f3dc3c" stroke="#d9bc16" stroke-width="0.9" stroke-linejoin="round"/><text x="5.2" y="9.799999999999999" font-family="Liberation Sans, sans-serif" font-weight="700" font-size="9.5" fill="#2a2a2a" textLength="14.600000000000001" lengthAdjust="spacingAndGlyphs">abc</text></svg>
<svg style="left:696px;top:90px" width="23" height="23" viewBox="0 0 23 23"><circle cx="8" cy="8.2" r="7" fill="#f6c800"/><path d="M8 8.2 L1.4 5.8 A7 7 0 0 0 8.6 15.2 Z" fill="#14a84a"/><path d="M8 8.2 L13.6 3.8 A7 7 0 0 1 8.6 15.2 Z" fill="#c01414"/><path d="M8 8.2 L1.4 5.8 A7 7 0 0 1 13.6 3.8 Z" fill="#f6c800"/><rect x="9.4" y="15.6" width="3.2" height="6.4" fill="#f6c800" stroke="#e0a800" stroke-width="0.6"/><rect x="13.4" y="9.4" width="3.2" height="12.6" fill="#14a84a" stroke="#0a7a30" stroke-width="0.7"/><rect x="17.6" y="16.6" width="3.2" height="5.4" fill="#c01414" stroke="#8a0c0c" stroke-width="0.7"/></svg>
<div class="a" style="left:728px;top:91px;width:24px;height:20px;box-sizing:border-box;border:1.5px solid #2c72e0;background:#dfe9f6"></div>
<svg style="left:727px;top:91px" width="28" height="24" viewBox="0 0 28 24"><path d="M6.0 2.2 H20.799999999999997 V12.8 H6.0 L1.4 7.5 Z" fill="#f3dc3c" stroke="#d9bc16" stroke-width="0.9" stroke-linejoin="round"/><text x="5.6" y="10.8" font-family="Liberation Sans, sans-serif" font-weight="700" font-size="9.5" fill="#2a2a2a" textLength="9.6" lengthAdjust="spacingAndGlyphs">ab</text><path d="M17.4 6.4 Q17.4 4.8 18.6 4.8 Q19.8 4.8 19.8 6.4 V12 H17.4 Z" fill="#f4f4f4" stroke="#c8c8c8" stroke-width="0.5"/><circle cx="19.8" cy="15.8" r="4.6" fill="#a01c24"/><circle cx="18.4" cy="14.4" r="1.6" fill="#c85058"/></svg>
<svg style="left:760px;top:91px" width="28" height="24" viewBox="0 0 28 24"><path d="M6.0 2.2 H20.799999999999997 V12.8 H6.0 L1.4 7.5 Z" fill="#e2e1d8" stroke="#d6d5cc" stroke-width="0.9" stroke-linejoin="round"/><text x="5.6" y="10.8" font-family="Liberation Sans, sans-serif" font-weight="700" font-size="9.5" fill="#c4c3bc" textLength="9.6" lengthAdjust="spacingAndGlyphs">ab</text><path d="M17.4 6.4 Q17.4 4.8 18.6 4.8 Q19.8 4.8 19.8 6.4 V12 H17.4 Z" fill="#f6f6f6"/><circle cx="19.8" cy="15.8" r="4.6" fill="#cfcbcb"/></svg>
<svg style="left:793px;top:91px" width="28" height="24" viewBox="0 0 28 24"><path d="M6.0 2.2 H21.4 V12.8 H6.0 L1.4 7.5 Z" fill="#e2e1d8" stroke="#d6d5cc" stroke-width="0.9" stroke-linejoin="round"/><text x="5.6" y="10.8" font-family="Liberation Sans, sans-serif" font-weight="700" font-size="9.5" fill="#c4c3bc" textLength="14" lengthAdjust="spacingAndGlyphs">abc</text><path d="M9.4 17.4 Q16 11.4 22.8 17.4 Q16 23 9.4 17.4 Z" fill="#f4f4f4" stroke="#dcdcdc" stroke-width="0.8"/><circle cx="16" cy="17.2" r="2.4" fill="#d0d0d0"/></svg>
<svg style="left:826.8px;top:92.3px" width="26" height="22" viewBox="0 0 26 22"><path d="M5.3999999999999995 1.4 H20.400000000000002 V12.0 H5.3999999999999995 L0.8 6.699999999999999 Z" fill="#e2e1d8" stroke="#d6d5cc" stroke-width="0.9" stroke-linejoin="round"/><text x="5.0" y="10.0" font-family="Liberation Sans, sans-serif" font-weight="700" font-size="9.5" fill="#c4c3bc" textLength="13.600000000000001" lengthAdjust="spacingAndGlyphs">abc</text><rect x="13.4" y="9.6" width="10.4" height="10.4" rx="1.6" fill="#cdcdcd"/><path d="M15 14.8 H19 V12.4 L22.4 14.8 L19 17.4 V14.8" fill="#f6f6f6" stroke="#f6f6f6" stroke-width="1.6"/></svg>
<svg style="left:859.8px;top:92.3px" width="26" height="22" viewBox="0 0 26 22"><path d="M5.3999999999999995 1.4 H20.400000000000002 V12.0 H5.3999999999999995 L0.8 6.699999999999999 Z" fill="#e2e1d8" stroke="#d6d5cc" stroke-width="0.9" stroke-linejoin="round"/><text x="5.0" y="10.0" font-family="Liberation Sans, sans-serif" font-weight="700" font-size="9.5" fill="#c4c3bc" textLength="13.600000000000001" lengthAdjust="spacingAndGlyphs">abc</text><rect x="13.4" y="9.6" width="10.4" height="10.4" rx="1.6" fill="#cdcdcd"/><path d="M16 16.6 A3 3 0 1 1 19.4 17.6" fill="none" stroke="#f4f4f4" stroke-width="1.5"/><path d="M18.4 15.6 L18.4 19.2 L21.4 17.4 Z" fill="#f4f4f4"/></svg>
<svg style="left:892.8px;top:92.3px" width="26" height="22" viewBox="0 0 26 22"><path d="M5.3999999999999995 1.4 H20.400000000000002 V12.0 H5.3999999999999995 L0.8 6.699999999999999 Z" fill="#e2e1d8" stroke="#d6d5cc" stroke-width="0.9" stroke-linejoin="round"/><text x="5.0" y="10.0" font-family="Liberation Sans, sans-serif" font-weight="700" font-size="9.5" fill="#c4c3bc" textLength="13.600000000000001" lengthAdjust="spacingAndGlyphs">abc</text><rect x="13.4" y="9.6" width="10.4" height="10.4" rx="1.6" fill="#d6d3ca"/><path d="M15.4 18.2 L21.6 11.8" stroke="#f6f6f6" stroke-width="2.4"/><path d="M14.6 19 L16.6 18.4 L15.2 17 Z" fill="#f6f6f6"/></svg>
<svg style="left:930px;top:93px" width="5" height="18" viewBox="0 0 5 18"><rect x="1" y="1" width="1" height="1" fill="#fdfdfd"/><rect x="0" y="0" width="1" height="1" fill="#a6a6a6"/><rect x="4" y="1" width="1" height="1" fill="#fdfdfd"/><rect x="3" y="0" width="1" height="1" fill="#a6a6a6"/><rect x="1" y="4" width="1" height="1" fill="#fdfdfd"/><rect x="0" y="3" width="1" height="1" fill="#a6a6a6"/><rect x="4" y="4" width="1" height="1" fill="#fdfdfd"/><rect x="3" y="3" width="1" height="1" fill="#a6a6a6"/><rect x="1" y="7" width="1" height="1" fill="#fdfdfd"/><rect x="0" y="6" width="1" height="1" fill="#a6a6a6"/><rect x="4" y="7" width="1" height="1" fill="#fdfdfd"/><rect x="3" y="6" width="1" height="1" fill="#a6a6a6"/><rect x="1" y="10" width="1" height="1" fill="#fdfdfd"/><rect x="0" y="9" width="1" height="1" fill="#a6a6a6"/><rect x="4" y="10" width="1" height="1" fill="#fdfdfd"/><rect x="3" y="9" width="1" height="1" fill="#a6a6a6"/><rect x="1" y="13" width="1" height="1" fill="#fdfdfd"/><rect x="0" y="12" width="1" height="1" fill="#a6a6a6"/><rect x="4" y="13" width="1" height="1" fill="#fdfdfd"/><rect x="3" y="12" width="1" height="1" fill="#a6a6a6"/><rect x="1" y="16" width="1" height="1" fill="#fdfdfd"/><rect x="0" y="15" width="1" height="1" fill="#a6a6a6"/><rect x="4" y="16" width="1" height="1" fill="#fdfdfd"/><rect x="3" y="15" width="1" height="1" fill="#a6a6a6"/></svg>
<svg style="left:947px;top:93px" width="5" height="18" viewBox="0 0 5 18"><rect x="1" y="1" width="1" height="1" fill="#fdfdfd"/><rect x="0" y="0" width="1" height="1" fill="#a6a6a6"/><rect x="4" y="1" width="1" height="1" fill="#fdfdfd"/><rect x="3" y="0" width="1" height="1" fill="#a6a6a6"/><rect x="1" y="4" width="1" height="1" fill="#fdfdfd"/><rect x="0" y="3" width="1" height="1" fill="#a6a6a6"/><rect x="4" y="4" width="1" height="1" fill="#fdfdfd"/><rect x="3" y="3" width="1" height="1" fill="#a6a6a6"/><rect x="1" y="7" width="1" height="1" fill="#fdfdfd"/><rect x="0" y="6" width="1" height="1" fill="#a6a6a6"/><rect x="4" y="7" width="1" height="1" fill="#fdfdfd"/><rect x="3" y="6" width="1" height="1" fill="#a6a6a6"/><rect x="1" y="10" width="1" height="1" fill="#fdfdfd"/><rect x="0" y="9" width="1" height="1" fill="#a6a6a6"/><rect x="4" y="10" width="1" height="1" fill="#fdfdfd"/><rect x="3" y="9" width="1" height="1" fill="#a6a6a6"/><rect x="1" y="13" width="1" height="1" fill="#fdfdfd"/><rect x="0" y="12" width="1" height="1" fill="#a6a6a6"/><rect x="4" y="13" width="1" height="1" fill="#fdfdfd"/><rect x="3" y="12" width="1" height="1" fill="#a6a6a6"/><rect x="1" y="16" width="1" height="1" fill="#fdfdfd"/><rect x="0" y="15" width="1" height="1" fill="#a6a6a6"/><rect x="4" y="16" width="1" height="1" fill="#fdfdfd"/><rect x="3" y="15" width="1" height="1" fill="#a6a6a6"/></svg>
<svg style="left:960px;top:90px" width="24" height="23" viewBox="0 0 24 23"><path d="M6.6 1 H12.8 Q14.8 1 14.8 3 V8 Q14.8 10 12.8 10 H7.4 Q5.4 10 5.4 12 V14.4 H2.8 Q0.8 14.4 0.8 12.4 V8.2 Q0.8 6.2 2.8 6.2 H9.8 V5.2 H4.6 V3 Q4.6 1 6.6 1 Z" fill="#3776ab"/><circle cx="7.2" cy="3.2" r="0.9" fill="#fff"/><path d="M14 20.6 H7.8 Q5.8 20.6 5.8 18.6 V13.6 Q5.8 11.6 7.8 11.6 H13.2 Q15.2 11.6 15.2 9.6 V7.2 H17.8 Q19.8 7.2 19.8 9.2 V13.4 Q19.8 15.4 17.8 15.4 H10.8 V16.4 H16 V18.6 Q16 20.6 14 20.6 Z" fill="#ffd343"/><circle cx="13.4" cy="18.4" r="0.9" fill="#fff"/><path d="M16.4 15.8 L21.6 18.4 L16.4 21" fill="none" stroke="#222" stroke-width="1.3"/></svg>
<svg style="left:996px;top:93px" width="5" height="18" viewBox="0 0 5 18"><rect x="1" y="1" width="1" height="1" fill="#fdfdfd"/><rect x="0" y="0" width="1" height="1" fill="#a6a6a6"/><rect x="4" y="1" width="1" height="1" fill="#fdfdfd"/><rect x="3" y="0" width="1" height="1" fill="#a6a6a6"/><rect x="1" y="4" width="1" height="1" fill="#fdfdfd"/><rect x="0" y="3" width="1" height="1" fill="#a6a6a6"/><rect x="4" y="4" width="1" height="1" fill="#fdfdfd"/><rect x="3" y="3" width="1" height="1" fill="#a6a6a6"/><rect x="1" y="7" width="1" height="1" fill="#fdfdfd"/><rect x="0" y="6" width="1" height="1" fill="#a6a6a6"/><rect x="4" y="7" width="1" height="1" fill="#fdfdfd"/><rect x="3" y="6" width="1" height="1" fill="#a6a6a6"/><rect x="1" y="10" width="1" height="1" fill="#fdfdfd"/><rect x="0" y="9" width="1" height="1" fill="#a6a6a6"/><rect x="4" y="10" width="1" height="1" fill="#fdfdfd"/><rect x="3" y="9" width="1" height="1" fill="#a6a6a6"/><rect x="1" y="13" width="1" height="1" fill="#fdfdfd"/><rect x="0" y="12" width="1" height="1" fill="#a6a6a6"/><rect x="4" y="13" width="1" height="1" fill="#fdfdfd"/><rect x="3" y="12" width="1" height="1" fill="#a6a6a6"/><rect x="1" y="16" width="1" height="1" fill="#fdfdfd"/><rect x="0" y="15" width="1" height="1" fill="#a6a6a6"/><rect x="4" y="16" width="1" height="1" fill="#fdfdfd"/><rect x="3" y="15" width="1" height="1" fill="#a6a6a6"/></svg>
<svg style="left:1009px;top:89px" width="22" height="23" viewBox="0 0 22 23"><rect x="1" y="1.2" width="19.8" height="20.6" rx="1" fill="#1e2a3c" stroke="#141c28" stroke-width="0.8"/><rect x="5.4" y="2" width="14.6" height="19" fill="#6a98cc"/><path d="M9.8 8 Q9.8 5.4 12.6 5.4 Q15.4 5.4 15.4 8 Q15.4 9.8 13.6 10.8 Q12.6 11.4 12.6 13.4" fill="none" stroke="#fff" stroke-width="1.5"/><circle cx="12.6" cy="16.4" r="1" fill="#fff"/></svg>
<svg style="left:1045px;top:93px" width="5" height="18" viewBox="0 0 5 18"><rect x="1" y="1" width="1" height="1" fill="#fdfdfd"/><rect x="0" y="0" width="1" height="1" fill="#a6a6a6"/><rect x="4" y="1" width="1" height="1" fill="#fdfdfd"/><rect x="3" y="0" width="1" height="1" fill="#a6a6a6"/><rect x="1" y="4" width="1" height="1" fill="#fdfdfd"/><rect x="0" y="3" width="1" height="1" fill="#a6a6a6"/><rect x="4" y="4" width="1" height="1" fill="#fdfdfd"/><rect x="3" y="3" width="1" height="1" fill="#a6a6a6"/><rect x="1" y="7" width="1" height="1" fill="#fdfdfd"/><rect x="0" y="6" width="1" height="1" fill="#a6a6a6"/><rect x="4" y="7" width="1" height="1" fill="#fdfdfd"/><rect x="3" y="6" width="1" height="1" fill="#a6a6a6"/><rect x="1" y="10" width="1" height="1" fill="#fdfdfd"/><rect x="0" y="9" width="1" height="1" fill="#a6a6a6"/><rect x="4" y="10" width="1" height="1" fill="#fdfdfd"/><rect x="3" y="9" width="1" height="1" fill="#a6a6a6"/><rect x="1" y="13" width="1" height="1" fill="#fdfdfd"/><rect x="0" y="12" width="1" height="1" fill="#a6a6a6"/><rect x="4" y="13" width="1" height="1" fill="#fdfdfd"/><rect x="3" y="12" width="1" height="1" fill="#a6a6a6"/><rect x="1" y="16" width="1" height="1" fill="#fdfdfd"/><rect x="0" y="15" width="1" height="1" fill="#a6a6a6"/><rect x="4" y="16" width="1" height="1" fill="#fdfdfd"/><rect x="3" y="15" width="1" height="1" fill="#a6a6a6"/></svg>
<div class="a" style="left:4px;top:704px;width:200px;height:21px;box-sizing:border-box;border:1px solid #bdbdbd;border-radius:3px;background:#f6f6f6"></div>
<svg style="left:13px;top:707px" width="14" height="14" viewBox="0 0 14 14"><circle cx="5.4" cy="5.4" r="4" fill="none" stroke="#9a9a9a" stroke-width="1.3"/><path d="M8.4 8.4 L12.6 12.6" stroke="#9a9a9a" stroke-width="1.5"/></svg>
<span class="t" style="left:33.00px;top:707.30px;height:17px;line-height:17px;font-size:12px;color:#8a8a8a;letter-spacing:-0.379px;">Type to locate (Ctrl+K)</span>
<span class="t" style="left:212.60px;top:707.30px;height:17px;line-height:17px;font-size:12px;color:#1a1a1a;letter-spacing:-0.387px;">Toggles the editing state of the current layer</span>
<span class="t" style="left:550.20px;top:706.80px;height:17px;line-height:17px;font-size:12px;color:#000;letter-spacing:-0.413px;">Coordinate:</span>
<div class="a" style="left:611px;top:703px;width:110px;height:22px;box-sizing:border-box;border:1px solid #b9b9b9;border-radius:3px;background:#fff"></div>
<span class="t" style="left:618.60px;top:706.80px;height:17px;line-height:17px;font-size:12px;color:#000;letter-spacing:-0.535px;">11578216,2474174</span>
<svg style="left:724px;top:705px" width="18" height="17" viewBox="0 0 18 17"><path d="M3.4 2.4 Q7 0.6 10.2 3.2 L13.8 11 Q14.4 14.2 11 15.6 Q7.4 16.6 5.4 13.6 L2 6 Q1.6 3.6 3.4 2.4 Z" fill="#e8e8e8" stroke="#2a2a2a" stroke-width="1"/><path d="M3.6 3 L7.8 9.6 M6.4 1.8 L9.6 8.4 M2.6 6.6 L11.6 3.8" stroke="#2a2a2a" stroke-width="1"/><ellipse cx="9.4" cy="12" rx="2" ry="1.4" fill="#2a2a2a" transform="rotate(-25 9.4 12)"/><path d="M12.6 4.6 L15 2.6 M13.6 6.6 L16.4 6.2 M11.4 2.8 L12.4 0.6" stroke="#555" stroke-width="0.8"/></svg>
<span class="t" style="left:753.00px;top:706.80px;height:17px;line-height:17px;font-size:12px;color:#000;letter-spacing:-0.806px;">Scale</span>
<div class="a" style="left:782px;top:703px;width:81px;height:22px;box-sizing:border-box;border:1px solid #b9b9b9;border-radius:3px;background:#fff"></div>
<div class="a" style="left:842px;top:704px;width:1px;height:20px;background:#c4c4c4"></div>
<span class="t" style="left:786.40px;top:706.80px;height:17px;line-height:17px;font-size:12px;color:#000;letter-spacing:-0.285px;">1:117911</span>
<svg style="left:848px;top:712px" width="8" height="5" viewBox="0 0 8 5"><path d="M0 0.4 H7.6 L3.8 4.2 Z" fill="#4a4a4a"/></svg>
<svg style="left:874px;top:706px" width="14" height="16" viewBox="0 0 14 16"><path d="M3.4 7.6 V4.8 Q3.4 1.4 6.8 1.4 Q10.2 1.4 10.2 4.8 V7.6" fill="none" stroke="#8a8a8a" stroke-width="1.8"/><rect x="0.8" y="7" width="12" height="8.6" rx="1.2" fill="#636363"/></svg>
<span class="t" style="left:895.40px;top:706.80px;height:17px;line-height:17px;font-size:12px;color:#000;letter-spacing:-0.540px;">Magnifier</span>
<div class="a" style="left:943px;top:704px;width:88px;height:20px;box-sizing:border-box;border:1px solid #b9b9b9;border-radius:3px;background:#fff"></div>
<div class="a" style="left:1016px;top:705px;width:1px;height:18px;background:#c4c4c4"></div>
<span class="t" style="left:948.40px;top:706.80px;height:17px;line-height:17px;font-size:12px;color:#000;letter-spacing:-0.426px;">100%</span>
<svg style="left:1020px;top:708px" width="8" height="12" viewBox="0 0 8 12"><path d="M0.2 4 L3.8 0.4 L7.4 4 Z M0.2 7.4 H7.4 L3.8 11 Z" fill="#4a4a4a"/></svg>
<span class="t" style="left:1039.00px;top:706.80px;height:17px;line-height:17px;font-size:12px;color:#000;letter-spacing:-0.338px;">Rotation</span>
<div class="a" style="left:1090px;top:704px;width:84px;height:20px;box-sizing:border-box;border:1px solid #b9b9b9;border-radius:3px;background:#fff"></div>
<div class="a" style="left:1159px;top:705px;width:1px;height:18px;background:#c4c4c4"></div>
<span class="t" style="left:1094.20px;top:706.80px;height:17px;line-height:17px;font-size:12px;color:#000;letter-spacing:0.134px;">0.0 °</span>
<svg style="left:1163px;top:708px" width="8" height="12" viewBox="0 0 8 12"><path d="M0.2 4 L3.8 0.4 L7.4 4 Z M0.2 7.4 H7.4 L3.8 11 Z" fill="#4a4a4a"/></svg>
<div class="a" style="left:1180px;top:707px;width:14px;height:14px;box-sizing:border-box;border:1px solid #b4b4b4;background:#fff"></div>
<svg style="left:1180px;top:707px" width="14" height="14" viewBox="0 0 14 14"><path d="M3 7 L5.8 10.4 L11 2.8" fill="none" stroke="#111" stroke-width="1.7"/></svg>
<span class="t" style="left:1198.00px;top:706.80px;height:17px;line-height:17px;font-size:12px;color:#000;letter-spacing:-0.643px;">Render</span>
<svg style="left:1251px;top:706px" width="16" height="16" viewBox="0 0 16 16"><circle cx="7.8" cy="8.4" r="6.6" fill="#f4f4f4" stroke="#8c8c8c" stroke-width="1"/><ellipse cx="7.8" cy="8.4" rx="3" ry="6.6" fill="none" stroke="#8c8c8c" stroke-width="0.9"/><path d="M1.2 8.4 H14.4 M2.4 5 H13.2 M2.4 11.8 H13.2 M7.8 1.8 V15" stroke="#8c8c8c" stroke-width="0.9"/><path d="M0.4 6.4 L7.8 0.6 L15.2 6.4" fill="none" stroke="#7a7a7a" stroke-width="1.3"/></svg>
<span class="t" style="left:1270.00px;top:706.80px;height:17px;line-height:17px;font-size:12px;color:#000;letter-spacing:-0.986px;">EPSG:3857</span>
<svg style="left:1342px;top:706px" width="18" height="17" viewBox="0 0 18 17"><path d="M8.6 0.8 Q16.6 0.8 16.6 6.8 Q16.6 10.6 13.4 12 L15.6 15.4 L10.6 12.8 Q9.6 12.9 8.6 12.9 Q0.6 12.9 0.6 6.8 Q0.6 0.8 8.6 0.8 Z" fill="#595959"/><circle cx="4.8" cy="6.9" r="1.2" fill="#fff"/><circle cx="8.6" cy="6.9" r="1.2" fill="#fff"/><circle cx="12.4" cy="6.9" r="1.2" fill="#fff"/></svg>
<svg style="left:16px;top:740px" width="16" height="16" viewBox="0 0 16 16"><path d="M0 2.2 L6.4 1.3 V7.6 H0 Z M7.3 1.2 L16 0 V7.6 H7.3 Z M0 8.5 H6.4 V14.8 L0 13.9 Z M7.3 8.5 H16 V16 L7.3 14.8 Z" fill="#000"/></svg>
<div class="a" style="left:49px;top:729px;width:343px;height:38px;background:#fff;box-shadow:-1px 0 0 #c8c8c8"></div>
<div class="a" style="left:49px;top:728px;width:343px;height:1px;background:#cdcdcd"></div>
<svg style="left:60.2px;top:739.4px" width="18" height="18" viewBox="0 0 18 18"><circle cx="10.4" cy="6.6" r="5" fill="none" stroke="#111" stroke-width="1.3"/><path d="M6.8 10.2 L1 16" stroke="#111" stroke-width="1.4"/></svg>
<span class="t" style="left:87.60px;top:737.90px;height:21px;line-height:21px;font-size:15px;color:#3a3a3a;letter-spacing:-0.241px;">Type here to search</span>
<svg style="left:407px;top:739px" width="18" height="18" viewBox="0 0 18 18"><circle cx="9" cy="9" r="6.6" fill="none" stroke="#0a0a0a" stroke-width="2.1"/></svg>
<svg style="left:455px;top:739px" width="18" height="17" viewBox="0 0 18 17"><rect x="2" y="4.6" width="9.6" height="7.2" fill="none" stroke="#0a0a0a" stroke-width="1.1"/><path d="M1.6 1 V3 H12 V1 M1.6 15.6 V13.6 H12 V15.6" fill="none" stroke="#0a0a0a" stroke-width="1.1"/><path d="M15.2 1 V4 M15.2 9.6 V15.6" stroke="#0a0a0a" stroke-width="1.1"/><rect x="14" y="5.2" width="2.4" height="2.6" fill="#0a0a0a"/></svg>
<svg style="left:502px;top:735px" width="25" height="26" viewBox="0 0 25 26"><path d="M7 7 V3.6 Q7 1.6 9 1.6 H16 Q18 1.6 18 3.6 V7" fill="none" stroke="#1e1e1e" stroke-width="1.8"/><path d="M1 6.8 H24 V23 Q24 24.4 22.6 24.4 H2.4 Q1 24.4 1 23 Z" fill="#2a2a2a"/><rect x="1" y="6.8" width="23" height="1.4" fill="#3c3c3c"/><rect x="8" y="11.6" width="4.2" height="4.2" fill="#f25022"/><rect x="12.9" y="11.6" width="4.2" height="4.2" fill="#7fba00"/><rect x="8" y="16.6" width="4.2" height="4.2" fill="#00a4ef"/><rect x="12.9" y="16.6" width="4.2" height="4.2" fill="#ffb900"/></svg>
<svg style="left:551px;top:736px" width="26" height="24" viewBox="0 0 26 24"><path d="M1 8.4 L12.6 0.6 L25 8.4 V22.8 H1 Z" fill="#1467c0"/><path d="M3.6 7.6 H22.4 V16 H3.6 Z" fill="#f2f2f2"/><path d="M3.6 7.6 H22.4 L13 14.6 Z" fill="#fff"/><path d="M1 8.4 L13 15.6 L25 8.4 V22.8 H1 Z" fill="#2fa8ee"/><path d="M1 8.4 L13 15.6 L25 22.8 H1 Z" fill="#1f90e0"/><path d="M13 15.6 L25 8.4 V22.8 Z" fill="#45c4f6"/></svg>
<svg style="left:600px;top:735px" width="26" height="26" viewBox="0 0 26 26"><defs><linearGradient id="eg1" x1="0" y1="0" x2="1" y2="1"><stop offset="0" stop-color="#35c1f1"/><stop offset="0.6" stop-color="#43d38c"/><stop offset="1" stop-color="#6fdc4a"/></linearGradient><linearGradient id="eg2" x1="0" y1="0" x2="0" y2="1"><stop offset="0" stop-color="#1b9de2"/><stop offset="1" stop-color="#1358b8"/></linearGradient></defs><circle cx="13" cy="13" r="12.2" fill="url(#eg2)"/><path d="M2 9 Q5 0.8 13.6 0.8 Q22 0.8 24.8 9 Q26 15.6 20.4 17.4 Q15.6 18 14.6 15 Q17.6 12.6 15.6 9.8 Q12.6 6.4 7.6 8.4 Q3.6 10 2 9 Z" fill="url(#eg1)"/><path d="M9.6 11.4 Q7 16 10.4 20.6 Q14 24.6 20.6 22.4 Q15.6 25.8 10 24.4 Q3 21.6 3.4 14.6 Q5 10.2 9.6 11.4 Z" fill="#0f4a9c"/><path d="M14.6 15 Q15.8 18 20.4 17.4 Q23.6 16.4 24.6 13.4 Q24.6 17.6 21.8 20.4 Q17 21 14.4 18.4 Q13.6 16.4 14.6 15 Z" fill="#efe8b4"/></svg>
<svg style="left:651px;top:738px" width="22" height="19" viewBox="0 0 22 19"><path d="M0.6 0.8 H8.6 L10.2 2.6 H21 V17.4 H0.6 Z" fill="#f6b93c"/><rect x="0.6" y="0.8" width="8.4" height="2.2" fill="#e6a01e"/><path d="M0.6 3.6 H21 V17.4 H0.6 Z" fill="#fcd46a"/><path d="M4.4 9.4 H17.4 V17.8 H13.4 V13 H8.4 V17.8 H4.4 Z" fill="#3f8fe0"/><rect x="4.4" y="9.4" width="13" height="2" fill="#5aa6ee"/></svg>
<svg style="left:699px;top:736px" width="24" height="24" viewBox="0 0 24 24"><circle cx="11.6" cy="11.6" r="11.2" fill="#e54335"/><path d="M11.6 11.6 L1.9 6 A11.2 11.2 0 0 0 10 22.7 Z" fill="#23a455"/><path d="M11.6 11.6 L10 22.7 A11.2 11.2 0 0 0 21.3 6 Z" fill="#fbc116"/><path d="M11.6 11.6 L21.3 6 A11.2 11.2 0 0 0 1.9 6 Z" fill="#e54335"/><circle cx="11.6" cy="11.6" r="5.2" fill="#f4f4f4"/><circle cx="11.6" cy="11.6" r="4.1" fill="#4c8bf5"/></svg>
<div class="a" style="left:736px;top:728px;width:45px;height:38px;background:#f6f2dc"></div>
<div class="a" style="left:780px;top:728px;width:1px;height:38px;background:#e4dcb0"></div>
<svg style="left:748.4px;top:736.4px" width="23.6" height="23.6" viewBox="0 0 16 16"><defs><linearGradient id="qg" x1="0" y1="0" x2="0" y2="1"><stop offset="0" stop-color="#74aa22"/><stop offset="1" stop-color="#4f9428"/></linearGradient></defs><circle cx="7.9" cy="7.6" r="6.1" fill="none" stroke="url(#qg)" stroke-width="3.3"/><path d="M8.6 8.4 L14.6 14.2" stroke="#fff" stroke-width="4.4" stroke-linecap="butt"/><path d="M9 8.8 L14.3 13.9" stroke="#4e9630" stroke-width="2.7" stroke-linecap="round"/><path d="M8 7.8 L10 9.8" stroke="#c9c23a" stroke-width="2.6"/><path d="M5.5 5.7 L9.7 7.5 L7.5 9.7 Z" fill="#f47f16"/></svg>
<svg style="left:796px;top:735px" width="25" height="24" viewBox="0 0 25 24"><path d="M1.6 2.4 Q1.6 1.2 2.8 1.2 H22.6 V22.6 H2.8 Q1.6 22.6 1.6 21.4 Z" fill="#e9f2e4" stroke="#2f8a3c" stroke-width="1"/><path d="M2.2 1.8 H22 V12 Q12 9 2.2 16 Z" fill="#4aa84a"/><path d="M2.2 1.8 H22 V6 Q12 4 2.2 10 Z" fill="#6cc060"/><path d="M4.6 4.6 H8.6 L11.4 9 L14.2 4.6 H18.2 L13.4 11.6 L18.4 19 H14.2 L11.4 14.4 L8.4 19 H4.4 L9.4 11.6 Z" fill="#1f7a2e" stroke="#e9f2e4" stroke-width="0.5"/><path d="M11.6 13.4 L23.4 11 L23.4 20 L12.6 22.4 Z" fill="#f6faf4" stroke="#9ac49a" stroke-width="0.5"/><path d="M13.4 15.4 L22.6 13.4 M13.6 17.6 L22.6 15.6 M13.8 19.8 L22.6 17.8" stroke="#7ab87a" stroke-width="0.8"/></svg>
<svg style="left:846px;top:736px" width="24" height="24" viewBox="0 0 24 24"><defs><linearGradient id="gg" x1="0" y1="0" x2="1" y2="1"><stop offset="0" stop-color="#2e9a62"/><stop offset="1" stop-color="#1b6e44"/></linearGradient></defs><rect x="0" y="0" width="23.8" height="23.6" rx="1.6" fill="url(#gg)"/><rect x="5" y="4.2" width="6.4" height="4.4" fill="#7df0b4"/><rect x="12.4" y="4.2" width="6.4" height="4.4" fill="#8ff8c2"/><rect x="5" y="9.6" width="6.4" height="4.4" fill="#5fd898"/><rect x="12.4" y="9.6" width="6.4" height="4.4" fill="#6fe4a6"/><rect x="5" y="15" width="6.4" height="4.4" fill="#48b87c"/><rect x="12.4" y="15" width="6.4" height="4.4" fill="#52c488"/></svg>
<div class="a" style="left:642px;top:766px;width:40px;height:2px;background:#0f79d4"></div>
<div class="a" style="left:691px;top:766px;width:40px;height:2px;background:#0f79d4"></div>
<div class="a" style="left:736px;top:766px;width:48px;height:2px;background:#0f79d4"></div>
<div class="a" style="left:789px;top:766px;width:40px;height:2px;background:#0f79d4"></div>
<div class="a" style="left:838px;top:766px;width:40px;height:2px;background:#0f79d4"></div>
<svg style="left:1040px;top:738px" width="21" height="21" viewBox="0 0 21 21"><defs><linearGradient id="mg" x1="0" y1="0" x2="0" y2="1"><stop offset="0" stop-color="#ffe21a"/><stop offset="1" stop-color="#f8a412"/></linearGradient></defs><path d="M11.6 1.2 Q19.4 3.4 19.4 10.4 Q19.4 18.6 10.6 19.2 Q5 19.2 1.6 14.4 Q9 16.4 12.2 10.4 Q14 5.6 11.6 1.2 Z" fill="url(#mg)"/><path d="M1.4 7.2 Q0.4 5.4 2.2 4.6 Q2.6 2.4 5 2.8 Q7 1.8 8.2 3.8 Q9.8 4.4 9 6.2 Q8.4 7.4 7 7.2 Z" fill="#cfe4f6"/></svg>
<span class="t" style="left:1071.00px;top:738.10px;height:21px;line-height:21px;font-size:15px;color:#3c3c3c;letter-spacing:-1.479px;">12°C</span>
<svg style="left:1116px;top:744px" width="14" height="8" viewBox="0 0 14 8"><path d="M1 7 L6.9 1.2 L12.8 7" fill="none" stroke="#1a1a1a" stroke-width="1.3"/></svg>
<svg style="left:1141px;top:742px" width="15" height="14" viewBox="0 0 15 14"><circle cx="11.6" cy="11.4" r="1.5" fill="#1a1a1a"/><path d="M7.6 12.6 A4.4 4.4 0 0 1 12.4 7.4" fill="none" stroke="#1a1a1a" stroke-width="1.2"/><path d="M4.4 12.8 A7.6 7.6 0 0 1 12.6 4.2" fill="none" stroke="#1a1a1a" stroke-width="1.2"/><path d="M1.2 13 A10.8 10.8 0 0 1 12.8 1.2" fill="none" stroke="#1a1a1a" stroke-width="1.2"/></svg>
<svg style="left:1162px;top:741px" width="18" height="13" viewBox="0 0 18 13"><rect x="5" y="3.6" width="10.6" height="6.8" fill="none" stroke="#111" stroke-width="1.1"/><rect x="6.4" y="5" width="7.8" height="4" fill="#111"/><rect x="15.8" y="5.4" width="1.4" height="3.2" fill="#111"/><path d="M1.6 0.6 V3 M4.2 0.6 V3 M0.6 3 H5.2 V5.4 Q5.2 6.8 2.9 6.8 Q0.6 6.8 0.6 5.4 Z M2.9 6.8 V11.6" fill="#efe8b4" stroke="#111" stroke-width="1.1"/></svg>
<svg style="left:1186px;top:741px" width="18" height="14" viewBox="0 0 18 14"><path d="M1 4.8 H3.6 L7 1.4 V12.6 L3.6 9.2 H1 Z" fill="none" stroke="#111" stroke-width="1.1"/><path d="M9.4 4.8 Q10.8 7 9.4 9.2" fill="none" stroke="#111" stroke-width="1"/><path d="M11.8 3 Q14 7 11.8 11" fill="none" stroke="#7a7a6a" stroke-width="1"/><path d="M14.2 1.2 Q17.4 7 14.2 12.8" fill="none" stroke="#b0ac90" stroke-width="1"/></svg>
<span class="t" style="left:1213.00px;top:739.50px;height:17px;line-height:17px;font-size:12px;color:#111;letter-spacing:-0.839px;">ENG</span>
<span class="t" style="left:1264.00px;top:730.10px;height:17px;line-height:17px;font-size:12px;color:#222;letter-spacing:-0.506px;">03:09</span>
<span class="t" style="left:1249.00px;top:748.10px;height:17px;line-height:17px;font-size:12px;color:#222;letter-spacing:-0.256px;">04/07/2021</span>
<svg style="left:1325px;top:739px" width="25" height="26" viewBox="0 0 25 26"><path d="M0.4 1 H16 V13.6 H7.6 L5 16.4 V13.6 H0.4 Z" fill="#0a0a0a"/><path d="M3.4 4.4 H13 M3.4 7.2 H13 M3.4 10 H9" stroke="#efe8b4" stroke-width="1"/><circle cx="15.4" cy="16.6" r="7.8" fill="#b9b7ab" stroke="#8f8d80" stroke-width="0.8"/></svg>
<span class="t" style="left:1336.80px;top:747.50px;height:17px;line-height:17px;font-size:12px;color:#111;letter-spacing:0.312px;">7</span>
<div class="a" style="left:1361px;top:728px;width:1px;height:40px;background:#cfc9a0"></div>
<div class="a" style="left:0;top:121px;width:6px;height:578px;background:#f0f0f0"></div>
<div class="a" style="left:6px;top:30px;width:487px;height:683px;background:#fff;box-shadow:0 3px 8px 0px rgba(0,0,0,0.30);"></div>
<div class="a" style="left:6px;top:30px;width:485px;height:681px;border:1px solid #707070;background:#fff"></div>
<svg style="left:15px;top:37px" width="16" height="16" viewBox="0 0 16 16"><defs><linearGradient id="qg" x1="0" y1="0" x2="0" y2="1"><stop offset="0" stop-color="#74aa22"/><stop offset="1" stop-color="#4f9428"/></linearGradient></defs><circle cx="7.9" cy="7.6" r="6.1" fill="none" stroke="url(#qg)" stroke-width="3.3"/><path d="M8.6 8.4 L14.6 14.2" stroke="#fff" stroke-width="4.4" stroke-linecap="butt"/><path d="M9 8.8 L14.3 13.9" stroke="#4e9630" stroke-width="2.7" stroke-linecap="round"/><path d="M8 7.8 L10 9.8" stroke="#c9c23a" stroke-width="2.6"/><path d="M5.5 5.7 L9.7 7.5 L7.5 9.7 Z" fill="#f47f16"/></svg>
<span class="t" style="left:39.50px;top:37.50px;height:17px;line-height:17px;font-size:12px;color:#000;letter-spacing:-0.278px;">Merged :: Features Total: 88, Filtered: 88, Selected: 0</span>
<svg style="left:360px;top:31px" width="132" height="30" viewBox="0 0 132 30"><path d="M13 14.5 H23" stroke="#000" stroke-width="1"/><rect x="58.5" y="9.5" width="9" height="9" fill="none" stroke="#000" stroke-width="1"/><path d="M104 9.3 L114 19.3 M114 9.3 L104 19.3" stroke="#000" stroke-width="1.1"/></svg>
<div class="a" style="left:7px;top:61px;width:485px;height:31px;background:#f0f0f0"></div>
<svg style="left:14px;top:68px" width="16" height="16" viewBox="0 0 16 16"><path d="M10.96 1.06 L14.24 3.34 L7.24 13.34 L3.96 11.06 Z" fill="#e3cc35" stroke="#b8a21e" stroke-width="0.6"/><path d="M12.2 2.6 L5.6 12" stroke="#f6ee90" stroke-width="1"/><path d="M13.6 3.6 L6.8 13" stroke="#cdb524" stroke-width="0.9"/><path d="M10.96 1.06 L14.24 3.34 L13.5 4.4 L10.2 2.1 Z" fill="#e8e8e8" stroke="#c8c8c8" stroke-width="0.4"/><path d="M3.96 11.06 L7.24 13.34 L3.2 15.9 Z" fill="#9a9a9a"/><path d="M3.5 14.2 L4.6 15 L3.2 15.9 Z" fill="#555"/></svg><svg style="left:40px;top:68px" width="16" height="16" viewBox="0 0 16 16"><rect x="1" y="1" width="14" height="3.6" rx="0.8" fill="#e0dfd6"/><rect x="1" y="5.8" width="14" height="3.6" rx="0.8" fill="#e0dfd6"/><rect x="1" y="10.6" width="14" height="3.6" rx="0.8" fill="#e0dfd6"/><path d="M12.3 0.4 L14.2 1.5 L7 13.5 L5 15.5 L5.2 12.4 Z" fill="#dcd8d6" stroke="#eeeeee" stroke-width="0.7"/></svg><svg style="left:65px;top:68px" width="16" height="16" viewBox="0 0 16 16"><rect x="0.8" y="0.8" width="13.4" height="13.6" rx="1.6" fill="#dcdcdc" stroke="#e0e0d8" stroke-width="0.8"/><rect x="3.4" y="1.6" width="8" height="4.6" fill="#e9e9e9"/><rect x="3.6" y="9.2" width="7.8" height="5" fill="#e7e7e7"/><rect x="5" y="10" width="1.6" height="3.4" fill="#d2d2d2"/><path d="M14.2 6 L15.6 7 L10.4 14.6 L9 15.6 L9 13.8 Z" fill="#d8d0cc"/></svg><svg style="left:90px;top:68px" width="16" height="16" viewBox="0 0 16 16"><path d="M1.2 7.2 A6.6 6.6 0 0 1 12.2 3 L14.3 0.9 L14.3 7.2 L8.2 7.2 L10.2 5.1 A3.8 3.8 0 0 0 4.3 7.2 Z" fill="#3f86d4"/><path d="M14.6 8.6 A6.6 6.6 0 0 1 3.6 12.8 L1.5 14.9 L1.5 8.6 L7.6 8.6 L5.6 10.7 A3.8 3.8 0 0 0 11.5 8.6 Z" fill="#3a7cc8"/><path d="M2.2 6.4 A5.8 5.8 0 0 1 11.6 3.4" fill="none" stroke="#8cbcec" stroke-width="1"/></svg><div class="a" style="left:114px;top:71px;width:1px;height:11px;background:#dcdcdc"></div><div class="a" style="left:115px;top:71px;width:1px;height:11px;background:#fff"></div><svg style="left:122px;top:68px" width="16" height="16" viewBox="0 0 16 16"><rect x="1" y="1" width="12.6" height="12.4" rx="1" fill="#e6e8ec" stroke="#dde2ea" stroke-width="0.8"/><rect x="0.4" y="4.6" width="14" height="2.6" fill="#dfddd2"/><path d="M2.4 2.8 H6 M8 2.8 H12 M2.4 9.4 H6 M2.4 11.6 H6" stroke="#d6dae2" stroke-width="0.9"/><rect x="8.6" y="8.6" width="7" height="7" rx="1" fill="#d6d4c6"/><path d="M12.1 9.6 V14.6 M9.6 12.1 H14.6 M10.3 10.3 L13.9 13.9 M13.9 10.3 L10.3 13.9" stroke="#f4f4f4" stroke-width="0.9"/></svg><svg style="left:147px;top:68px" width="16" height="16" viewBox="0 0 16 16"><path d="M3 2.4 H13 M6.4 1.2 H9.6" stroke="#d9c9cb" stroke-width="1.1" fill="none"/><path d="M3.6 4.4 H12.4 V13.6 Q12.4 14.4 11.6 14.4 H4.4 Q3.6 14.4 3.6 13.6 Z" fill="#efe9ea" stroke="#d9c9cb" stroke-width="1"/><path d="M6.5 4.6 V14 M9.5 4.6 V14" stroke="#d9c9cb" stroke-width="1"/></svg><svg style="left:172px;top:68px" width="16" height="16" viewBox="0 0 16 16"><path d="M1.4 3.2 L12 9.6 M1 8 L12.2 4.2" stroke="#d2d0d0" stroke-width="1.1" fill="none"/><ellipse cx="13" cy="4.8" rx="1.7" ry="1.5" fill="none" stroke="#d2d0d0" stroke-width="1"/><ellipse cx="12.8" cy="10.8" rx="1.6" ry="2" fill="none" stroke="#d2d0d0" stroke-width="1"/></svg><svg style="left:197px;top:68px" width="16" height="16" viewBox="0 0 16 16"><path d="M5.4 1.2 H10.8 L13.4 3.8 V11.6 H5.4 Z" fill="#eeeeee" stroke="#e0e0e0" stroke-width="0.8"/><path d="M2.6 4.4 H8 L10.6 7 V14.6 H2.6 Z" fill="#e6e6e6" stroke="#dadada" stroke-width="0.8"/><path d="M4 9 H9 M4 11 H9 M4 13 H9" stroke="#dcdcdc" stroke-width="0.8"/></svg><svg style="left:222px;top:68px" width="16" height="16" viewBox="0 0 16 16"><rect x="2.2" y="1.4" width="11.6" height="13.6" rx="1" fill="#e3e1df" stroke="#dad8d6" stroke-width="0.8"/><rect x="5.2" y="0.6" width="5.6" height="2.6" rx="0.6" fill="#dcdcdc"/><path d="M4.2 4.2 H9.6 L11.8 6.4 V13.6 H4.2 Z" fill="#ededed" stroke="#dedede" stroke-width="0.6"/><path d="M5.4 8 H10.4 M5.4 10 H10.4 M5.4 12 H10.4" stroke="#dcdcdc" stroke-width="0.8"/></svg><div class="a" style="left:246px;top:71px;width:1px;height:11px;background:#dcdcdc"></div><div class="a" style="left:247px;top:71px;width:1px;height:11px;background:#fff"></div><svg style="left:254px;top:68px" width="16" height="16" viewBox="0 0 16 16"><rect x="5.4" y="5.4" width="9.4" height="9.4" rx="1.4" fill="#fbe74d" stroke="#dfc230" stroke-width="0.8"/><path d="M8.4 2.4 Q7.6 1 5.4 1.2 Q2.6 1.4 2.8 3.6 Q3 5.2 5.6 5.4 Q2.2 5.6 2.2 8 Q2.4 10.4 5.6 10.2 Q7.8 10 8.6 8.4" fill="none" stroke="#5b2a78" stroke-width="1.3"/></svg><svg style="left:279px;top:68px" width="16" height="16" viewBox="0 0 16 16"><rect x="1.2" y="1.2" width="13.4" height="3.6" rx="1" fill="#fbe74d" stroke="#dfc230" stroke-width="0.7"/><rect x="1.2" y="6.2" width="13.4" height="3.6" rx="1" fill="#fbe74d" stroke="#dfc230" stroke-width="0.7"/><rect x="1.2" y="11.2" width="13.4" height="3.6" rx="1" fill="#fbe74d" stroke="#dfc230" stroke-width="0.7"/></svg><svg style="left:304px;top:68px" width="16" height="16" viewBox="0 0 16 16"><path d="M2.6 1.4 H13.6 Q14.6 1.4 14.6 2.4 V13.4 Z" fill="#e6e6e6" stroke="#c8c8c8" stroke-width="0.8"/><path d="M1.4 2.4 L13.6 14.6 H2.4 Q1.4 14.6 1.4 13.6 Z" fill="#fbe74d" stroke="#dfc230" stroke-width="0.8"/><path d="M2.8 1.6 L14.4 13.2" stroke="#9a9a9a" stroke-width="0.7" stroke-dasharray="1.2 0.8"/></svg><svg style="left:329px;top:68px" width="16" height="16" viewBox="0 0 16 16"><rect x="1.2" y="1.2" width="9.4" height="9.4" rx="1.4" fill="#fbe74d" stroke="#dfc230" stroke-width="0.8"/><rect x="8.6" y="8.2" width="7.2" height="7.6" rx="2" fill="#e03030"/><circle cx="12.2" cy="12" r="2.6" fill="none" stroke="#ffe8e8" stroke-width="0.9"/><path d="M10.4 13.8 L14 10.2" stroke="#ffe8e8" stroke-width="0.9"/></svg><svg style="left:354px;top:67.5px" width="16" height="16" viewBox="0 0 16 16"><path d="M1 2 H15 V3.4 L9.6 9 V15.6 L6.6 14 V9 L1 3.4 Z" fill="#6f9bd0" stroke="#4f7db6" stroke-width="0.7"/><rect x="1.6" y="1.6" width="12.8" height="1.6" fill="#f5e341" stroke="#d0bc2c" stroke-width="0.4"/></svg><svg style="left:379px;top:68px" width="16" height="16" viewBox="0 0 16 16"><rect x="1.2" y="1.2" width="13.4" height="13.4" rx="1.2" fill="#dfe8f4" stroke="#8cb0de" stroke-width="1"/><rect x="1.6" y="1.6" width="12.6" height="2.6" fill="#a9c6ea"/><path d="M2.6 6.6 H13.2 M2.6 8.8 H13.2" stroke="#f8fbff" stroke-width="1"/><rect x="1.8" y="11" width="12.2" height="3" fill="#ead23c"/><path d="M3 12.6 H12.8" stroke="#f6ec9a" stroke-width="0.8" stroke-dasharray="3 1.2"/><path d="M8 2 L11.4 5.4 H9.2 V11 H6.8 V5.4 H4.6 Z" fill="#4c82c4"/></svg><svg style="left:404px;top:68px" width="16" height="16" viewBox="0 0 16 16"><rect x="1.4" y="1.4" width="9.8" height="9.8" rx="1.4" fill="#fbe74d" stroke="#dfc230" stroke-width="0.8"/><path d="M8 0.4 L10.6 3.2 H9 V5.2 H7 V3.2 H5.4 Z" fill="#5b8fd0" stroke="#3f74b8" stroke-width="0.5"/><path d="M8 15.8 L10.6 13 H9 V11 H7 V13 H5.4 Z" fill="#5b8fd0" stroke="#3f74b8" stroke-width="0.5"/><path d="M0.4 8 L3.2 5.4 V7 H5.2 V9 H3.2 V10.6 Z" fill="#5b8fd0" stroke="#3f74b8" stroke-width="0.5"/><path d="M15.8 8 L13 5.4 V7 H11 V9 H13 V10.6 Z" fill="#5b8fd0" stroke="#3f74b8" stroke-width="0.5"/></svg><svg style="left:429px;top:68px" width="16" height="16" viewBox="0 0 16 16"><rect x="0.6" y="1.6" width="8" height="8.6" rx="1.2" fill="#fbe74d" stroke="#dfc230" stroke-width="0.8"/><path d="M5.4 10.4 L0.8 15" stroke="#e9a820" stroke-width="1.8" stroke-linecap="round"/><path d="M5.8 10 L4.6 11.2" stroke="#222" stroke-width="2" stroke-linecap="round"/><circle cx="9.8" cy="5.8" r="5.2" fill="#ecebe0" stroke="#5e5e5e" stroke-width="0.9"/><path d="M9.8 0.9 A4.9 4.9 0 0 1 9.8 10.7 Z" fill="#f4f4f4"/><path d="M9.8 0.9 A4.9 4.9 0 0 0 9.8 10.7 Z" fill="#ede7c0"/><circle cx="9.8" cy="5.8" r="5.2" fill="none" stroke="#5e5e5e" stroke-width="0.9"/></svg><div class="a" style="left:453px;top:71px;width:1px;height:11px;background:#dcdcdc"></div><div class="a" style="left:454px;top:71px;width:1px;height:11px;background:#fff"></div><svg style="left:478px;top:72px" width="10" height="9" viewBox="0 0 10 9"><path d="M1 1.6 L3.8 4.6 L1 7.6 M5.2 1.6 L8 4.6 L5.2 7.6" fill="none" stroke="#000" stroke-width="1.5"/></svg>
<div class="a" style="left:7px;top:92px;width:485px;height:1px;background:#a0a0a0"></div>
<div class="a" style="left:7px;top:93px;width:471px;height:580px;background:#fff;overflow:hidden" id="tbl">
<div class="a" style="left:19px;top:9px;width:452px;height:29px;background:#e9e7e3"></div>
<div class="a" style="left:19px;top:38px;width:452px;height:1px;background:#cfcfcf"></div>
<div class="a" style="left:0;top:9px;width:18px;height:29px;background:linear-gradient(90deg,#f1f1f1,#fbfbfb)"></div>
<div class="a" style="left:0;top:38px;width:18px;height:1px;background:#c6c6c6"></div>
<span class="t" style="left:2.85px;top:16.40px;height:17px;line-height:17px;font-size:12px;color:#000;letter-spacing:-0.430px;">70</span>
<span class="t" style="left:22.00px;top:16.40px;height:17px;line-height:17px;font-size:12px;color:#000;letter-spacing:0.042px;">Binh</span>
<span class="t" style="left:209.10px;top:16.40px;height:17px;line-height:17px;font-size:12px;color:#000;letter-spacing:-0.188px;">1</span>
<span class="t" style="left:309.13px;top:16.40px;height:17px;line-height:17px;font-size:12px;color:#000;letter-spacing:-0.218px;">8</span>
<span class="t" style="left:321.60px;top:16.40px;height:17px;line-height:17px;font-size:12px;color:#000;letter-spacing:0.043px;">Another reproje...</span>
<span class="t" style="left:421.60px;top:16.40px;height:17px;line-height:17px;font-size:12px;color:#000;letter-spacing:-0.057px;">C:\Users\</span>
<div class="a" style="left:19px;top:39px;width:452px;height:29px;background:#ffffff"></div>
<div class="a" style="left:19px;top:68px;width:452px;height:1px;background:#cfcfcf"></div>
<div class="a" style="left:0;top:39px;width:18px;height:29px;background:linear-gradient(90deg,#f1f1f1,#fbfbfb)"></div>
<div class="a" style="left:0;top:68px;width:18px;height:1px;background:#c6c6c6"></div>
<span class="t" style="left:2.85px;top:46.40px;height:17px;line-height:17px;font-size:12px;color:#000;letter-spacing:-0.430px;">71</span>
<span class="t" style="left:22.00px;top:46.40px;height:17px;line-height:17px;font-size:12px;color:#000;letter-spacing:0.042px;">Binh</span>
<span class="t" style="left:209.10px;top:46.40px;height:17px;line-height:17px;font-size:12px;color:#000;letter-spacing:-0.188px;">1</span>
<span class="t" style="left:309.13px;top:46.40px;height:17px;line-height:17px;font-size:12px;color:#000;letter-spacing:-0.218px;">5</span>
<span class="t" style="left:321.60px;top:46.40px;height:17px;line-height:17px;font-size:12px;color:#000;letter-spacing:0.043px;">Another reproje...</span>
<span class="t" style="left:421.60px;top:46.40px;height:17px;line-height:17px;font-size:12px;color:#000;letter-spacing:-0.057px;">C:\Users\</span>
<div class="a" style="left:19px;top:69px;width:452px;height:29px;background:#e9e7e3"></div>
<div class="a" style="left:19px;top:98px;width:452px;height:1px;background:#cfcfcf"></div>
<div class="a" style="left:0;top:69px;width:18px;height:29px;background:linear-gradient(90deg,#f1f1f1,#fbfbfb)"></div>
<div class="a" style="left:0;top:98px;width:18px;height:1px;background:#c6c6c6"></div>
<span class="t" style="left:2.85px;top:76.40px;height:17px;line-height:17px;font-size:12px;color:#000;letter-spacing:-0.430px;">72</span>
<span class="t" style="left:22.00px;top:76.40px;height:17px;line-height:17px;font-size:12px;color:#000;letter-spacing:0.042px;">Binh</span>
<span class="t" style="left:209.10px;top:76.40px;height:17px;line-height:17px;font-size:12px;color:#000;letter-spacing:-0.188px;">1</span>
<span class="t" style="left:309.13px;top:76.40px;height:17px;line-height:17px;font-size:12px;color:#000;letter-spacing:-0.218px;">6</span>
<span class="t" style="left:321.60px;top:76.40px;height:17px;line-height:17px;font-size:12px;color:#000;letter-spacing:0.043px;">Another reproje...</span>
<span class="t" style="left:421.60px;top:76.40px;height:17px;line-height:17px;font-size:12px;color:#000;letter-spacing:-0.057px;">C:\Users\</span>
<div class="a" style="left:19px;top:99px;width:452px;height:29px;background:#ffffff"></div>
<div class="a" style="left:19px;top:128px;width:452px;height:1px;background:#cfcfcf"></div>
<div class="a" style="left:0;top:99px;width:18px;height:29px;background:linear-gradient(90deg,#f1f1f1,#fbfbfb)"></div>
<div class="a" style="left:0;top:128px;width:18px;height:1px;background:#c6c6c6"></div>
<span class="t" style="left:2.85px;top:106.40px;height:17px;line-height:17px;font-size:12px;color:#000;letter-spacing:-0.430px;">73</span>
<span class="t" style="left:22.00px;top:106.40px;height:17px;line-height:17px;font-size:12px;color:#000;letter-spacing:0.395px;">Hao</span>
<span class="t" style="left:209.10px;top:106.40px;height:17px;line-height:17px;font-size:12px;color:#000;letter-spacing:-0.188px;">2</span>
<span class="t" style="left:296.19px;top:106.40px;height:17px;line-height:17px;font-size:12px;color:#000;letter-spacing:-0.207px;">126</span>
<span class="t" style="left:321.60px;top:106.40px;height:17px;line-height:17px;font-size:12px;color:#000;letter-spacing:-0.065px;">Reprojected</span>
<span class="t" style="left:421.60px;top:106.40px;height:17px;line-height:17px;font-size:12px;color:#000;letter-spacing:-0.057px;">C:/Users/</span>
<div class="a" style="left:19px;top:129px;width:452px;height:29px;background:#e9e7e3"></div>
<div class="a" style="left:19px;top:158px;width:452px;height:1px;background:#cfcfcf"></div>
<div class="a" style="left:0;top:129px;width:18px;height:29px;background:linear-gradient(90deg,#f1f1f1,#fbfbfb)"></div>
<div class="a" style="left:0;top:158px;width:18px;height:1px;background:#c6c6c6"></div>
<span class="t" style="left:2.85px;top:136.40px;height:17px;line-height:17px;font-size:12px;color:#000;letter-spacing:-0.430px;">74</span>
<span class="t" style="left:22.00px;top:136.40px;height:17px;line-height:17px;font-size:12px;color:#000;letter-spacing:0.395px;">Hao</span>
<span class="t" style="left:209.10px;top:136.40px;height:17px;line-height:17px;font-size:12px;color:#000;letter-spacing:-0.188px;">2</span>
<span class="t" style="left:296.19px;top:136.40px;height:17px;line-height:17px;font-size:12px;color:#000;letter-spacing:-0.207px;">127</span>
<span class="t" style="left:321.60px;top:136.40px;height:17px;line-height:17px;font-size:12px;color:#000;letter-spacing:-0.065px;">Reprojected</span>
<span class="t" style="left:421.60px;top:136.40px;height:17px;line-height:17px;font-size:12px;color:#000;letter-spacing:-0.057px;">C:/Users/</span>
<div class="a" style="left:19px;top:159px;width:452px;height:29px;background:#ffffff"></div>
<div class="a" style="left:19px;top:188px;width:452px;height:1px;background:#cfcfcf"></div>
<div class="a" style="left:0;top:159px;width:18px;height:29px;background:linear-gradient(90deg,#f1f1f1,#fbfbfb)"></div>
<div class="a" style="left:0;top:188px;width:18px;height:1px;background:#c6c6c6"></div>
<span class="t" style="left:2.85px;top:166.40px;height:17px;line-height:17px;font-size:12px;color:#000;letter-spacing:-0.430px;">75</span>
<span class="t" style="left:22.00px;top:166.40px;height:17px;line-height:17px;font-size:12px;color:#000;letter-spacing:0.395px;">Hao</span>
<span class="t" style="left:209.10px;top:166.40px;height:17px;line-height:17px;font-size:12px;color:#000;letter-spacing:-0.188px;">2</span>
<span class="t" style="left:296.19px;top:166.40px;height:17px;line-height:17px;font-size:12px;color:#000;letter-spacing:-0.207px;">124</span>
<span class="t" style="left:321.60px;top:166.40px;height:17px;line-height:17px;font-size:12px;color:#000;letter-spacing:-0.065px;">Reprojected</span>
<span class="t" style="left:421.60px;top:166.40px;height:17px;line-height:17px;font-size:12px;color:#000;letter-spacing:-0.057px;">C:/Users/</span>
<div class="a" style="left:19px;top:189px;width:452px;height:29px;background:#e9e7e3"></div>
<div class="a" style="left:19px;top:218px;width:452px;height:1px;background:#cfcfcf"></div>
<div class="a" style="left:0;top:189px;width:18px;height:29px;background:linear-gradient(90deg,#f1f1f1,#fbfbfb)"></div>
<div class="a" style="left:0;top:218px;width:18px;height:1px;background:#c6c6c6"></div>
<span class="t" style="left:2.85px;top:196.40px;height:17px;line-height:17px;font-size:12px;color:#000;letter-spacing:-0.430px;">76</span>
<span class="t" style="left:22.00px;top:196.40px;height:17px;line-height:17px;font-size:12px;color:#000;letter-spacing:0.395px;">Hao</span>
<span class="t" style="left:209.10px;top:196.40px;height:17px;line-height:17px;font-size:12px;color:#000;letter-spacing:-0.188px;">1</span>
<span class="t" style="left:296.19px;top:196.40px;height:17px;line-height:17px;font-size:12px;color:#000;letter-spacing:-0.207px;">125</span>
<span class="t" style="left:321.60px;top:196.40px;height:17px;line-height:17px;font-size:12px;color:#000;letter-spacing:-0.065px;">Reprojected</span>
<span class="t" style="left:421.60px;top:196.40px;height:17px;line-height:17px;font-size:12px;color:#000;letter-spacing:-0.057px;">C:/Users/</span>
<div class="a" style="left:19px;top:219px;width:452px;height:29px;background:#ffffff"></div>
<div class="a" style="left:19px;top:248px;width:452px;height:1px;background:#cfcfcf"></div>
<div class="a" style="left:0;top:219px;width:18px;height:29px;background:linear-gradient(90deg,#f1f1f1,#fbfbfb)"></div>
<div class="a" style="left:0;top:248px;width:18px;height:1px;background:#c6c6c6"></div>
<span class="t" style="left:2.85px;top:226.40px;height:17px;line-height:17px;font-size:12px;color:#000;letter-spacing:-0.430px;">77</span>
<span class="t" style="left:22.00px;top:226.40px;height:17px;line-height:17px;font-size:12px;color:#000;letter-spacing:0.395px;">Hao</span>
<span class="t" style="left:209.10px;top:226.40px;height:17px;line-height:17px;font-size:12px;color:#000;letter-spacing:-0.188px;">1</span>
<span class="t" style="left:296.19px;top:226.40px;height:17px;line-height:17px;font-size:12px;color:#000;letter-spacing:-0.207px;">130</span>
<span class="t" style="left:321.60px;top:226.40px;height:17px;line-height:17px;font-size:12px;color:#000;letter-spacing:-0.065px;">Reprojected</span>
<span class="t" style="left:421.60px;top:226.40px;height:17px;line-height:17px;font-size:12px;color:#000;letter-spacing:-0.057px;">C:/Users/</span>
<div class="a" style="left:19px;top:249px;width:452px;height:29px;background:#e9e7e3"></div>
<div class="a" style="left:19px;top:278px;width:452px;height:1px;background:#cfcfcf"></div>
<div class="a" style="left:0;top:249px;width:18px;height:29px;background:linear-gradient(90deg,#f1f1f1,#fbfbfb)"></div>
<div class="a" style="left:0;top:278px;width:18px;height:1px;background:#c6c6c6"></div>
<span class="t" style="left:2.85px;top:256.40px;height:17px;line-height:17px;font-size:12px;color:#000;letter-spacing:-0.430px;">78</span>
<span class="t" style="left:22.00px;top:256.40px;height:17px;line-height:17px;font-size:12px;color:#000;letter-spacing:0.395px;">Hao</span>
<span class="t" style="left:209.10px;top:256.40px;height:17px;line-height:17px;font-size:12px;color:#000;letter-spacing:-0.188px;">1</span>
<span class="t" style="left:296.19px;top:256.40px;height:17px;line-height:17px;font-size:12px;color:#000;letter-spacing:-0.207px;">131</span>
<span class="t" style="left:321.60px;top:256.40px;height:17px;line-height:17px;font-size:12px;color:#000;letter-spacing:-0.065px;">Reprojected</span>
<span class="t" style="left:421.60px;top:256.40px;height:17px;line-height:17px;font-size:12px;color:#000;letter-spacing:-0.057px;">C:/Users/</span>
<div class="a" style="left:19px;top:279px;width:452px;height:29px;background:#ffffff"></div>
<div class="a" style="left:19px;top:308px;width:452px;height:1px;background:#cfcfcf"></div>
<div class="a" style="left:0;top:279px;width:18px;height:29px;background:linear-gradient(90deg,#f1f1f1,#fbfbfb)"></div>
<div class="a" style="left:0;top:308px;width:18px;height:1px;background:#c6c6c6"></div>
<span class="t" style="left:2.85px;top:286.40px;height:17px;line-height:17px;font-size:12px;color:#000;letter-spacing:-0.430px;">79</span>
<span class="t" style="left:22.00px;top:286.40px;height:17px;line-height:17px;font-size:12px;color:#000;letter-spacing:0.395px;">Hao</span>
<span class="t" style="left:209.10px;top:286.40px;height:17px;line-height:17px;font-size:12px;color:#000;letter-spacing:-0.188px;">1</span>
<span class="t" style="left:296.19px;top:286.40px;height:17px;line-height:17px;font-size:12px;color:#000;letter-spacing:-0.207px;">128</span>
<span class="t" style="left:321.60px;top:286.40px;height:17px;line-height:17px;font-size:12px;color:#000;letter-spacing:-0.065px;">Reprojected</span>
<span class="t" style="left:421.60px;top:286.40px;height:17px;line-height:17px;font-size:12px;color:#000;letter-spacing:-0.057px;">C:/Users/</span>
<div class="a" style="left:19px;top:309px;width:452px;height:29px;background:#e9e7e3"></div>
<div class="a" style="left:19px;top:338px;width:452px;height:1px;background:#cfcfcf"></div>
<div class="a" style="left:0;top:309px;width:18px;height:29px;background:linear-gradient(90deg,#f1f1f1,#fbfbfb)"></div>
<div class="a" style="left:0;top:338px;width:18px;height:1px;background:#c6c6c6"></div>
<span class="t" style="left:2.85px;top:316.40px;height:17px;line-height:17px;font-size:12px;color:#000;letter-spacing:-0.430px;">80</span>
<span class="t" style="left:22.00px;top:316.40px;height:17px;line-height:17px;font-size:12px;color:#000;letter-spacing:0.395px;">Hao</span>
<span class="t" style="left:209.10px;top:316.40px;height:17px;line-height:17px;font-size:12px;color:#000;letter-spacing:-0.188px;">1</span>
<span class="t" style="left:296.19px;top:316.40px;height:17px;line-height:17px;font-size:12px;color:#000;letter-spacing:-0.207px;">129</span>
<span class="t" style="left:321.60px;top:316.40px;height:17px;line-height:17px;font-size:12px;color:#000;letter-spacing:-0.065px;">Reprojected</span>
<span class="t" style="left:421.60px;top:316.40px;height:17px;line-height:17px;font-size:12px;color:#000;letter-spacing:-0.057px;">C:/Users/</span>
<div class="a" style="left:19px;top:339px;width:452px;height:29px;background:#ffffff"></div>
<div class="a" style="left:19px;top:368px;width:452px;height:1px;background:#cfcfcf"></div>
<div class="a" style="left:0;top:339px;width:18px;height:29px;background:linear-gradient(90deg,#f1f1f1,#fbfbfb)"></div>
<div class="a" style="left:0;top:368px;width:18px;height:1px;background:#c6c6c6"></div>
<span class="t" style="left:2.85px;top:346.40px;height:17px;line-height:17px;font-size:12px;color:#000;letter-spacing:-0.430px;">81</span>
<span class="t" style="left:22.00px;top:346.40px;height:17px;line-height:17px;font-size:12px;color:#000;letter-spacing:0.042px;">Binh</span>
<span class="t" style="left:209.10px;top:346.40px;height:17px;line-height:17px;font-size:12px;color:#000;letter-spacing:-0.188px;">1</span>
<span class="t" style="left:302.66px;top:346.40px;height:17px;line-height:17px;font-size:12px;color:#000;letter-spacing:-0.210px;">19</span>
<span class="t" style="left:321.60px;top:346.40px;height:17px;line-height:17px;font-size:12px;color:#000;letter-spacing:0.043px;">Another reproje...</span>
<span class="t" style="left:421.60px;top:346.40px;height:17px;line-height:17px;font-size:12px;color:#000;letter-spacing:-0.057px;">C:\Users\</span>
<div class="a" style="left:19px;top:369px;width:452px;height:29px;background:#e9e7e3"></div>
<div class="a" style="left:19px;top:398px;width:452px;height:1px;background:#cfcfcf"></div>
<div class="a" style="left:0;top:369px;width:18px;height:29px;background:linear-gradient(90deg,#f1f1f1,#fbfbfb)"></div>
<div class="a" style="left:0;top:398px;width:18px;height:1px;background:#c6c6c6"></div>
<span class="t" style="left:2.85px;top:376.40px;height:17px;line-height:17px;font-size:12px;color:#000;letter-spacing:-0.430px;">82</span>
<span class="t" style="left:22.00px;top:376.40px;height:17px;line-height:17px;font-size:12px;color:#000;letter-spacing:0.042px;">Binh</span>
<span class="t" style="left:209.10px;top:376.40px;height:17px;line-height:17px;font-size:12px;color:#000;letter-spacing:-0.188px;">1</span>
<span class="t" style="left:302.66px;top:376.40px;height:17px;line-height:17px;font-size:12px;color:#000;letter-spacing:-0.210px;">20</span>
<span class="t" style="left:321.60px;top:376.40px;height:17px;line-height:17px;font-size:12px;color:#000;letter-spacing:0.043px;">Another reproje...</span>
<span class="t" style="left:421.60px;top:376.40px;height:17px;line-height:17px;font-size:12px;color:#000;letter-spacing:-0.057px;">C:\Users\</span>
<div class="a" style="left:19px;top:399px;width:452px;height:29px;background:#ffffff"></div>
<div class="a" style="left:19px;top:428px;width:452px;height:1px;background:#cfcfcf"></div>
<div class="a" style="left:0;top:399px;width:18px;height:29px;background:linear-gradient(90deg,#f1f1f1,#fbfbfb)"></div>
<div class="a" style="left:0;top:428px;width:18px;height:1px;background:#c6c6c6"></div>
<span class="t" style="left:2.85px;top:406.40px;height:17px;line-height:17px;font-size:12px;color:#000;letter-spacing:-0.430px;">83</span>
<span class="t" style="left:22.00px;top:406.40px;height:17px;line-height:17px;font-size:12px;color:#000;letter-spacing:0.042px;">Binh</span>
<span class="t" style="left:209.10px;top:406.40px;height:17px;line-height:17px;font-size:12px;color:#000;letter-spacing:-0.188px;">1</span>
<span class="t" style="left:302.66px;top:406.40px;height:17px;line-height:17px;font-size:12px;color:#000;letter-spacing:-0.210px;">17</span>
<span class="t" style="left:321.60px;top:406.40px;height:17px;line-height:17px;font-size:12px;color:#000;letter-spacing:0.043px;">Another reproje...</span>
<span class="t" style="left:421.60px;top:406.40px;height:17px;line-height:17px;font-size:12px;color:#000;letter-spacing:-0.057px;">C:\Users\</span>
<div class="a" style="left:19px;top:429px;width:452px;height:29px;background:#e9e7e3"></div>
<div class="a" style="left:19px;top:458px;width:452px;height:1px;background:#cfcfcf"></div>
<div class="a" style="left:0;top:429px;width:18px;height:29px;background:linear-gradient(90deg,#f1f1f1,#fbfbfb)"></div>
<div class="a" style="left:0;top:458px;width:18px;height:1px;background:#c6c6c6"></div>
<span class="t" style="left:2.85px;top:436.40px;height:17px;line-height:17px;font-size:12px;color:#000;letter-spacing:-0.430px;">84</span>
<span class="t" style="left:22.00px;top:436.40px;height:17px;line-height:17px;font-size:12px;color:#000;letter-spacing:0.042px;">Binh</span>
<span class="t" style="left:209.10px;top:436.40px;height:17px;line-height:17px;font-size:12px;color:#000;letter-spacing:-0.188px;">3</span>
<span class="t" style="left:302.66px;top:436.40px;height:17px;line-height:17px;font-size:12px;color:#000;letter-spacing:-0.210px;">18</span>
<span class="t" style="left:321.60px;top:436.40px;height:17px;line-height:17px;font-size:12px;color:#000;letter-spacing:0.043px;">Another reproje...</span>
<span class="t" style="left:421.60px;top:436.40px;height:17px;line-height:17px;font-size:12px;color:#000;letter-spacing:-0.057px;">C:\Users\</span>
<div class="a" style="left:19px;top:459px;width:452px;height:29px;background:#ffffff"></div>
<div class="a" style="left:19px;top:488px;width:452px;height:1px;background:#cfcfcf"></div>
<div class="a" style="left:0;top:459px;width:18px;height:29px;background:linear-gradient(90deg,#f1f1f1,#fbfbfb)"></div>
<div class="a" style="left:0;top:488px;width:18px;height:1px;background:#c6c6c6"></div>
<span class="t" style="left:2.85px;top:466.40px;height:17px;line-height:17px;font-size:12px;color:#000;letter-spacing:-0.430px;">85</span>
<span class="t" style="left:22.00px;top:466.40px;height:17px;line-height:17px;font-size:12px;color:#000;letter-spacing:0.395px;">Hao</span>
<span class="t" style="left:209.10px;top:466.40px;height:17px;line-height:17px;font-size:12px;color:#000;letter-spacing:-0.188px;">1</span>
<span class="t" style="left:296.19px;top:466.40px;height:17px;line-height:17px;font-size:12px;color:#000;letter-spacing:-0.207px;">122</span>
<span class="t" style="left:321.60px;top:466.40px;height:17px;line-height:17px;font-size:12px;color:#000;letter-spacing:-0.065px;">Reprojected</span>
<span class="t" style="left:421.60px;top:466.40px;height:17px;line-height:17px;font-size:12px;color:#000;letter-spacing:-0.057px;">C:/Users/</span>
<div class="a" style="left:19px;top:489px;width:452px;height:29px;background:#e9e7e3"></div>
<div class="a" style="left:19px;top:518px;width:452px;height:1px;background:#cfcfcf"></div>
<div class="a" style="left:0;top:489px;width:18px;height:29px;background:linear-gradient(90deg,#f1f1f1,#fbfbfb)"></div>
<div class="a" style="left:0;top:518px;width:18px;height:1px;background:#c6c6c6"></div>
<span class="t" style="left:2.85px;top:496.40px;height:17px;line-height:17px;font-size:12px;color:#000;letter-spacing:-0.430px;">86</span>
<span class="t" style="left:22.00px;top:496.40px;height:17px;line-height:17px;font-size:12px;color:#000;letter-spacing:0.395px;">Hao</span>
<span class="t" style="left:209.10px;top:496.40px;height:17px;line-height:17px;font-size:12px;color:#000;letter-spacing:-0.188px;">1</span>
<span class="t" style="left:296.19px;top:496.40px;height:17px;line-height:17px;font-size:12px;color:#000;letter-spacing:-0.207px;">123</span>
<span class="t" style="left:321.60px;top:496.40px;height:17px;line-height:17px;font-size:12px;color:#000;letter-spacing:-0.065px;">Reprojected</span>
<span class="t" style="left:421.60px;top:496.40px;height:17px;line-height:17px;font-size:12px;color:#000;letter-spacing:-0.057px;">C:/Users/</span>
<div class="a" style="left:19px;top:519px;width:452px;height:29px;background:#ffffff"></div>
<div class="a" style="left:19px;top:548px;width:452px;height:1px;background:#cfcfcf"></div>
<div class="a" style="left:0;top:519px;width:18px;height:29px;background:linear-gradient(90deg,#f1f1f1,#fbfbfb)"></div>
<div class="a" style="left:0;top:548px;width:18px;height:1px;background:#c6c6c6"></div>
<span class="t" style="left:2.85px;top:526.40px;height:17px;line-height:17px;font-size:12px;color:#000;letter-spacing:-0.430px;">87</span>
<span class="t" style="left:22.00px;top:526.40px;height:17px;line-height:17px;font-size:12px;color:#000;letter-spacing:0.042px;">Binh</span>
<span class="t" style="left:209.10px;top:526.40px;height:17px;line-height:17px;font-size:12px;color:#000;letter-spacing:-0.188px;">1</span>
<span class="t" style="left:302.66px;top:526.40px;height:17px;line-height:17px;font-size:12px;color:#000;letter-spacing:-0.210px;">21</span>
<span class="t" style="left:321.60px;top:526.40px;height:17px;line-height:17px;font-size:12px;color:#000;letter-spacing:0.043px;">Another reproje...</span>
<span class="t" style="left:421.60px;top:526.40px;height:17px;line-height:17px;font-size:12px;color:#000;letter-spacing:-0.057px;">C:\Users\</span>
<div class="a" style="left:19px;top:549px;width:452px;height:29px;background:#e9e7e3"></div>
<div class="a" style="left:19px;top:578px;width:452px;height:1px;background:#cfcfcf"></div>
<div class="a" style="left:0;top:549px;width:18px;height:29px;background:linear-gradient(90deg,#f1f1f1,#fbfbfb)"></div>
<div class="a" style="left:0;top:578px;width:18px;height:1px;background:#c6c6c6"></div>
<span class="t" style="left:2.85px;top:556.40px;height:17px;line-height:17px;font-size:12px;color:#000;letter-spacing:-0.430px;">88</span>
<span class="t" style="left:22.00px;top:556.40px;height:17px;line-height:17px;font-size:12px;color:#000;letter-spacing:0.395px;">Hao</span>
<span class="t" style="left:209.10px;top:556.40px;height:17px;line-height:17px;font-size:12px;color:#000;letter-spacing:-0.188px;">1</span>
<span class="t" style="left:296.19px;top:556.40px;height:17px;line-height:17px;font-size:12px;color:#000;letter-spacing:-0.207px;">121</span>
<span class="t" style="left:321.60px;top:556.40px;height:17px;line-height:17px;font-size:12px;color:#000;letter-spacing:-0.065px;">Reprojected</span>
<span class="t" style="left:421.60px;top:556.40px;height:17px;line-height:17px;font-size:12px;color:#000;letter-spacing:-0.057px;">C:/Users/</span>
<div class="a" style="left:118px;top:0;width:1px;height:580px;background:#cfcfcf"></div>
<div class="a" style="left:218px;top:0;width:1px;height:580px;background:#cfcfcf"></div>
<div class="a" style="left:318px;top:0;width:1px;height:580px;background:#cfcfcf"></div>
<div class="a" style="left:418px;top:0;width:1px;height:580px;background:#cfcfcf"></div>
<div class="a" style="left:18px;top:0;width:1px;height:580px;background:#b4b4b4"></div>
<div class="a" style="left:0;top:0;width:471px;height:18px;background:linear-gradient(#ffffff 0%,#fbfbfb 40%,#ececec 100%)"></div>
<div class="a" style="left:0;top:18px;width:471px;height:1px;background:#bcbcbc"></div>
<div class="a" style="left:118px;top:0;width:1px;height:18px;background:#c4c4c4"></div>
<div class="a" style="left:218px;top:0;width:1px;height:18px;background:#c4c4c4"></div>
<div class="a" style="left:318px;top:0;width:1px;height:18px;background:#c4c4c4"></div>
<div class="a" style="left:418px;top:0;width:1px;height:18px;background:#c4c4c4"></div>
<span class="t" style="left:45.05px;top:1.50px;height:17px;line-height:17px;font-size:12px;color:#000;letter-spacing:-0.232px;">Observer</span>
<span class="t" style="left:142.05px;top:1.50px;height:17px;line-height:17px;font-size:12px;color:#000;letter-spacing:-0.356px;">GroupSize</span>
<span class="t" style="left:242.60px;top:1.50px;height:17px;line-height:17px;font-size:12px;color:#000;letter-spacing:0.303px;">Waypoint</span>
<span class="t" style="left:355.60px;top:1.50px;height:17px;line-height:17px;font-size:12px;color:#000;letter-spacing:-0.003px;">layer</span>
<span class="t" style="left:456.60px;top:1.50px;height:17px;line-height:17px;font-size:12px;color:#000;letter-spacing:0.285px;">path</span>
</div>
<div class="a" style="left:7px;top:672px;width:471px;height:1px;background:#bcbcbc"></div>
<div class="a" style="left:477px;top:93px;width:1px;height:580px;background:#c9c9c9"></div>
<div class="a" style="left:478px;top:93px;width:14px;height:579px;background:#e6e6e6"></div>
<div class="a" style="left:478px;top:93px;width:14px;height:13px;background:linear-gradient(90deg,#fdfdfd,#f1f1f1);border-bottom:1px solid #c4c4c4"></div>
<svg style="left:478px;top:93px" width="14" height="14"><path d="M3 8.6 L7 4.2 L11 8.6 Z" fill="#5a5a5a"/></svg>
<div class="a" style="left:478px;top:545px;width:14px;height:113px;background:linear-gradient(90deg,#fefefe,#f3f3f3);border-top:1px solid #c4c4c4;border-bottom:1px solid #c4c4c4;box-sizing:border-box"></div>
<div class="a" style="left:478px;top:658px;width:14px;height:14px;background:linear-gradient(90deg,#fdfdfd,#f1f1f1)"></div>
<svg style="left:478px;top:658px" width="14" height="14"><path d="M3 5 L11 5 L7 9.5 Z" fill="#5a5a5a"/></svg>
<div class="a" style="left:7px;top:673px;width:471px;height:13px;background:#e6e6e6"></div>
<div class="a" style="left:7px;top:686px;width:485px;height:1px;background:#c4c4c4"></div>
<div class="a" style="left:7px;top:673px;width:13px;height:13px;background:linear-gradient(#fdfdfd,#f1f1f1);border-right:1px solid #c4c4c4"></div>
<svg style="left:7px;top:673px" width="14" height="13"><path d="M9.5 2.5 L9.5 10.5 L5 6.5 Z" fill="#5a5a5a"/></svg>
<div class="a" style="left:21px;top:673px;width:354px;height:13px;background:linear-gradient(#fefefe,#f3f3f3);border-right:1px solid #c4c4c4"></div>
<div class="a" style="left:463px;top:673px;width:14px;height:13px;background:linear-gradient(#fdfdfd,#f1f1f1);border-left:1px solid #c4c4c4;border-right:1px solid #c4c4c4;box-sizing:border-box"></div>
<svg style="left:463px;top:673px" width="14" height="13"><path d="M5 2.5 L5 10.5 L9.5 6.5 Z" fill="#5a5a5a"/></svg>
<div class="a" style="left:478px;top:673px;width:14px;height:13px;background:#f0f0f0"></div>
<div class="a" style="left:7px;top:687px;width:485px;height:25px;background:#f0f0f0"></div>
<div class="a" style="left:10px;top:688px;width:120px;height:22px;border:1px solid #c2c2c2;border-radius:3px;box-sizing:border-box;background:linear-gradient(#fefefe,#f2f2f2)"></div>
<svg style="left:15px;top:690px" width="16" height="16" viewBox="0 0 16 16"><path d="M1 1.5 H14.5 V3 L9.3 8.5 V14.5 L6.3 13 V8.5 L1 3 Z" fill="#6a98cc" stroke="#4a78b0" stroke-width="0.6"/><rect x="1" y="1" width="13.5" height="1.8" fill="#f1e046" stroke="#c9b72a" stroke-width="0.4"/></svg>
<span class="t" style="left:34.30px;top:691.20px;height:17px;line-height:17px;font-size:12px;color:#000;letter-spacing:-0.613px;">Show All Features</span>
<svg style="left:122px;top:703px" width="6" height="4"><path d="M0.2 0.2 L5.8 0.2 L3 3.2 Z" fill="#555"/></svg>
<svg style="left:446px;top:691px" width="14" height="14" viewBox="0 0 14 14"><rect x="0.5" y="0.5" width="13" height="13" rx="1" fill="#e4ecf6" stroke="#9db8dc" stroke-width="1"/><rect x="5.5" y="2.8" width="6" height="3" rx="0.8" fill="#fff" stroke="#b5c8e2" stroke-width="0.5"/><rect x="5.5" y="8.2" width="6" height="3" rx="0.8" fill="#fff" stroke="#b5c8e2" stroke-width="0.5"/><path d="M2 4.3 H4.8 M2 9.7 H4.8" stroke="#56708f" stroke-width="1"/></svg>
<div class="a" style="left:465px;top:688px;width:24px;height:22px;border:1px solid #bdbdbd;border-radius:3px;box-sizing:border-box;background:#dfdfdf"></div>
<svg style="left:470px;top:691px" width="14" height="14" viewBox="0 0 14 14"><rect x="0.5" y="0.5" width="13" height="13" rx="1" fill="#eef3fa" stroke="#8fb0dd" stroke-width="1"/><rect x="1" y="1" width="12" height="3.2" fill="#a9c3e6"/><path d="M2.4 2.6 H6 M8 2.6 H11.6" stroke="#4f7fc0" stroke-width="1"/><path d="M2.4 6.2 H6 M8 6.2 H11.6 M2.4 8.2 H6 M8 8.2 H11.6 M2.4 10.2 H6 M8 10.2 H11.6 M2.4 12.2 H6 M8 12.2 H11.6" stroke="#a5c0e6" stroke-width="0.9"/></svg>
</div>
</body></html>
